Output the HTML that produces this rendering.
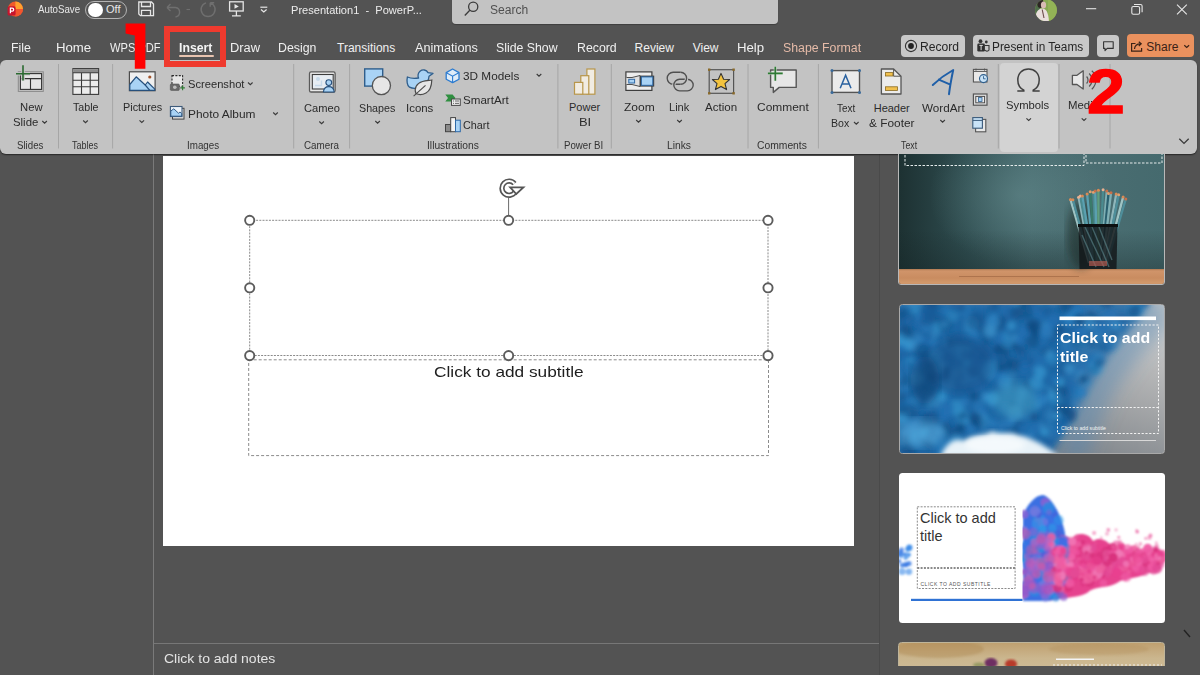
<!DOCTYPE html>
<html><head><meta charset="utf-8">
<style>
*{box-sizing:border-box;margin:0;padding:0}
html,body{width:1200px;height:675px;overflow:hidden;background:#535353;font-family:"Liberation Sans",sans-serif;position:relative}
.a{position:absolute}
.tx{position:absolute;white-space:pre;transform-origin:0 0;font-family:"Liberation Sans",sans-serif}
svg{position:absolute;overflow:visible}
</style></head><body>
<!-- title bar -->
<div class="a" style="left:452px;top:-4px;width:326px;height:28px;background:#c3c3c3;border-radius:4px;box-shadow:0 1px 1px rgba(0,0,0,.25)"></div>
<div class="a" style="left:85px;top:1px;width:42px;height:18px;border:1.5px solid #b4b4b4;border-radius:9px"></div>
<div class="a" style="left:88px;top:2.5px;width:14.5px;height:14.5px;background:#fff;border-radius:50%"></div>
<!-- tab row buttons -->
<div class="a" style="left:901px;top:35px;width:64px;height:22px;background:#c8c8c8;border-radius:4px"></div>
<div class="a" style="left:973px;top:35px;width:116px;height:22px;background:#c8c8c8;border-radius:4px"></div>
<div class="a" style="left:1097px;top:35px;width:22px;height:22px;background:#c8c8c8;border-radius:4px"></div>
<div class="a" style="left:1127px;top:34px;width:67px;height:23px;background:#ea915e;border-radius:4px"></div>
<div class="a" style="left:179px;top:55px;width:35px;height:2px;background:#e8c4b0;border-radius:1px"></div>
<!-- panes -->
<div class="a" style="left:153px;top:150px;width:1px;height:525px;background:#7a7a7a"></div>
<div class="a" style="left:879px;top:150px;width:1px;height:525px;background:#4a4a4a"></div>
<div class="a" style="left:154px;top:643px;width:725px;height:1px;background:#777"></div>
<!-- slide -->
<div class="a" style="left:163px;top:156px;width:691.3px;height:389.5px;background:#fff"></div>
<!-- ribbon -->
<div class="a" style="left:0px;top:60px;width:1197px;height:93.5px;background:#c3c3c3;border-radius:6px;box-shadow:0 1px 1.5px rgba(0,0,0,.55)"></div>
<div class="a" style="left:999.5px;top:62.5px;width:58.5px;height:89px;background:#d3d3d3;border-radius:4px"></div>
<!-- slide placeholders -->
<svg class="a" style="left:0;top:0" width="1200" height="675" viewBox="0 0 1200 675">
 <rect x="249.7" y="220.3" width="518.3" height="135.2" fill="none" stroke="#8a8a8a" stroke-width="1" stroke-dasharray="2 1.2"/>
 <rect x="248.7" y="359.8" width="519.8" height="95.8" fill="none" stroke="#8c8c8c" stroke-width="1" stroke-dasharray="3 2"/>
 <line x1="508.6" y1="198" x2="508.6" y2="215" stroke="#6a6a6a" stroke-width="1"/>
 <g fill="#fff" stroke="#5c5c5c" stroke-width="1.9">
  <circle cx="249.7" cy="220.3" r="4.6"/><circle cx="508.6" cy="220.3" r="4.6"/><circle cx="768" cy="220.3" r="4.6"/>
  <circle cx="249.7" cy="287.8" r="4.6"/><circle cx="768" cy="287.8" r="4.6"/>
  <circle cx="249.7" cy="355.6" r="4.6"/><circle cx="508.6" cy="355.6" r="4.6"/><circle cx="768" cy="355.6" r="4.6"/>
 </g>
 <g fill="none" stroke-linecap="butt">
  <path d="M514.9 192.3 A7.1 7.1 0 1 1 514.5 183.6" stroke="#555" stroke-width="5.3"/>
  <path d="M514.9 192.3 A7.1 7.1 0 1 1 514.5 183.6" stroke="#fff" stroke-width="2.0"/>
 </g>
 <path d="M510.2 187.4 L523.4 187.4 L516.3 194 Z" fill="#fff" stroke="#555" stroke-width="1.8" stroke-linejoin="miter"/>
</svg>
<svg class="a" style="left:0;top:0" width="1200" height="675" viewBox="0 0 1200 675">
 <!-- ===== title bar ===== -->
 <g>
  <circle cx="15.4" cy="9" r="7.6" fill="#f05a2a"/>
  <path d="M15.4 1.4 A7.6 7.6 0 0 1 23 9 L15.4 9 Z" fill="#ffa02e"/>
  <path d="M23 9 A7.6 7.6 0 0 1 15.4 16.6 L15.4 9 Z" fill="#f4552e"/>
  <rect x="7.6" y="6.3" width="8" height="9.2" rx="1.6" fill="#c8142c"/>
  <path d="M10.4 13.2 V8.2 H12.2 A1.5 1.5 0 0 1 12.2 11.2 H10.4" fill="none" stroke="#fff" stroke-width="1.25"/>
 </g>
 <g fill="none" stroke="#e6e6e6" stroke-width="1.3">
  <path d="M138.8 2 H151.5 L153.5 4 V15.6 H140.5 L138.8 13.9 Z"/>
  <path d="M141.5 2 V6.5 H150.5 V2"/>
  <path d="M141.5 15.6 V10.3 H150.5 V15.6"/>
 </g>
 <g fill="none" stroke="#6f6f6f" stroke-width="1.4">
  <path d="M167 7.5 L170.5 4 M167 7.5 L170.5 11 M167 7.5 H175.5 A4.8 4.8 0 0 1 175.5 17"/>
  <path d="M186.5 9.5 H190" stroke-width="1.1"/>
  <path d="M206 2.8 A7 7 0 1 0 210.2 2.8 M210.2 2.8 L210.2 6.8 M210.2 2.8 L214.2 2.8"/>
 </g>
 <g fill="none" stroke="#e6e6e6" stroke-width="1.3">
  <rect x="229.6" y="1.8" width="13.6" height="9.2"/>
  <path d="M236.4 11 V15.8 M232 15.8 H240.8"/>
 </g>
 <path d="M234.5 4 L234.5 8.8 L238.8 6.4 Z" fill="#e6e6e6"/>
 <g fill="none" stroke="#e6e6e6" stroke-width="1.2">
  <path d="M260.3 7.2 H267.3"/><path d="M261 9.5 L263.8 12 L266.6 9.5"/>
 </g>
 <g fill="none" stroke="#3c3c3c" stroke-width="1.3">
  <circle cx="473.2" cy="6.7" r="4.6"/><path d="M469.8 10.2 L464.8 15.5"/>
 </g>
 <g>
  <defs><clipPath id="av2"><circle cx="1046" cy="10.2" r="10.9"/></clipPath></defs>
  <circle cx="1046" cy="10.2" r="10.9" fill="#86a852"/>
  <g clip-path="url(#av2)">
   <rect x="1034" y="-2" width="6" height="24" fill="#4f6e4a"/>
   <rect x="1048" y="-2" width="12" height="24" fill="#93b356"/>
   <ellipse cx="1040.5" cy="3.5" rx="3.2" ry="4.5" fill="#2e2624"/>
   <ellipse cx="1043.5" cy="5" rx="2.6" ry="3.6" fill="#d9bcb4"/>
   <path d="M1035 22 C1035 13 1037.5 9 1042 8.5 C1046.5 8.5 1048.5 13 1049 22 Z" fill="#e9dfdc"/>
   <path d="M1042.2 9.5 L1044 18" stroke="#6a4848" stroke-width="1.1"/>
  </g>
 </g>
 <g fill="none" stroke="#e6e6e6" stroke-width="1.1">
  <path d="M1086 8.7 H1096.2"/>
  <rect x="1131.8" y="6.5" width="7.8" height="7.8" rx="1.5"/>
  <path d="M1134 4.5 H1140.5 A1.6 1.6 0 0 1 1142.1 6.1 V12.3"/>
  <path d="M1177 4.6 L1186.8 14.3 M1186.8 4.6 L1177 14.3"/>
 </g>
 <!-- ===== tab row buttons ===== -->
 <circle cx="911" cy="46" r="5.6" fill="none" stroke="#333" stroke-width="1.1"/>
 <circle cx="911" cy="46" r="2.9" fill="#222"/>
 <g>
  <circle cx="980.5" cy="41.2" r="1.9" fill="#333"/>
  <circle cx="986.3" cy="42" r="1.4" fill="#333"/>
  <rect x="977.3" y="43.6" width="7.6" height="8" rx="1.3" fill="#2e2e2e"/>
  <path d="M984.9 45.5 H989 V50 A2.4 2.4 0 0 1 984.9 50" fill="none" stroke="#333" stroke-width="1.1"/>
  <path d="M979.4 45.4 H982.8 M981.1 45.4 V50.2" stroke="#ddd" stroke-width="1"/>
 </g>
 <path d="M1103.6 41.8 H1113.2 V48.4 H1107.2 L1105 50.6 V48.4 H1103.6 Z" fill="none" stroke="#333" stroke-width="1.1" stroke-linejoin="round"/>
 <g fill="none" stroke="#3a2216" stroke-width="1.2">
  <path d="M1135.5 43.5 H1131.6 V51.2 H1141.6 V48"/>
  <path d="M1134.5 49 C1134.8 45 1137 43.8 1140.5 43.8 M1138.8 41.7 L1141.2 43.8 L1138.8 46"/>
  <path d="M1184.3 45.2 L1186.7 47.4 L1189.1 45.2"/>
 </g>
 <!-- ===== ribbon separators ===== -->
 <g stroke="#a6a6a6" stroke-width="1">
  <path d="M58.5 64 V148.5 M112.6 64 V148.5 M293.7 64 V148.5 M349.6 64 V148.5 M557.9 64 V148.5 M611.3 64 V148.5 M748 64 V148.5 M818.4 64 V148.5 M998.3 64 V148.5 M1059 64 V148.5 M1110 64 V148.5"/>
 </g>
 <!-- chevrons -->
 <g fill="none" stroke="#3a3a3a" stroke-width="1.1">
  <path d="M42.3 121 L44.6 123.2 L46.9 121"/>
  <path d="M83.2 120.5 L85.5 122.7 L87.8 120.5"/>
  <path d="M139.5 120.3 L141.8 122.5 L144.1 120.3"/>
  <path d="M248 82.5 L250.3 84.7 L252.6 82.5"/>
  <path d="M273.2 112.5 L275.5 114.7 L277.8 112.5"/>
  <path d="M319.3 121.5 L321.6 123.7 L323.9 121.5"/>
  <path d="M375.3 121 L377.6 123.2 L379.9 121"/>
  <path d="M536.7 74 L539 76.2 L541.3 74"/>
  <path d="M636.2 120 L638.5 122.2 L640.8 120"/>
  <path d="M677.2 120 L679.5 122.2 L681.8 120"/>
  <path d="M854 122 L856.3 124.2 L858.6 122"/>
  <path d="M940.3 120 L942.6 122.2 L944.9 120"/>
  <path d="M1026.4 118.3 L1028.7 120.5 L1031 118.3"/>
  <path d="M1081.7 118.3 L1084 120.5 L1086.3 118.3"/>
  <path d="M1179.3 138.8 L1184 143.4 L1188.7 138.8" stroke-width="1.3"/>
 </g>
 <!-- New Slide -->
 <rect x="18.3" y="71.8" width="25" height="19.6" fill="none" stroke="#8a8a8a" stroke-width="1"/>
 <rect x="20.4" y="73.6" width="21.2" height="15.8" fill="#e4e4e4" stroke="#333" stroke-width="1.1"/>
 <path d="M20.4 78.6 H41.6 M30.5 78.6 V89.4" stroke="#333" stroke-width="1.1"/>
 <path d="M23 65.3 V80.6 M16 73.8 H30" stroke="#c3c3c3" stroke-width="3.6"/>
 <path d="M23 65.3 V80.6 M16 73.8 H30" stroke="#2a6a30" stroke-width="1.6"/>
 <!-- Table -->
 <rect x="72.9" y="68.6" width="25.7" height="25.8" fill="#ececec" stroke="#3a3a3a" stroke-width="1.1"/>
 <rect x="73.4" y="69.1" width="24.7" height="3.6" fill="#8c8c8c"/>
 <path d="M72.9 72.8 H98.6 M72.9 80.3 H98.6 M72.9 86.8 H98.6 M81.5 72.8 V94.4 M90.2 72.8 V94.4" stroke="#3a3a3a" stroke-width="1.1"/>
 <!-- Pictures -->
 <rect x="129.4" y="71.8" width="25.7" height="18.9" fill="#efefef" stroke="#4a4a4a" stroke-width="1.2"/>
 <path d="M129.8 84.5 L136.2 76.8 L145.2 85 L147.6 82 L154.8 89.2 V90.3 H129.8 Z" fill="#a9d3f5" stroke="#27507c" stroke-width="1.2" stroke-linejoin="round"/>
 <path d="M145.2 85 L149.8 90.3" stroke="#27507c" stroke-width="1.2"/>
 <circle cx="149.8" cy="77" r="1.6" fill="#a3542a"/>
 <!-- Screenshot -->
 <rect x="172" y="75.6" width="10.6" height="10.6" fill="#e6e6e6" stroke="#2a2a2a" stroke-width="1.1" stroke-dasharray="2 1.4"/>
 <rect x="170.3" y="84" width="9" height="6.4" rx="1" fill="#6a6a6a" stroke="#555" stroke-width="0.6"/>
 <circle cx="174.8" cy="87.2" r="1.8" fill="#bdbdbd"/>
 <path d="M182.6 85.6 V90.2 M180.3 87.9 H184.9" stroke="#2e7a34" stroke-width="1.1"/>
 <!-- Photo Album -->
 <rect x="172.5" y="108.3" width="11.5" height="10.8" fill="#d9d9d9" stroke="#444" stroke-width="1"/>
 <rect x="170.4" y="106.5" width="11.6" height="10" fill="#eef4fa" stroke="#3d5a7a" stroke-width="1.1"/>
 <path d="M170.8 111 L173.8 108.8 L178.5 113.2 L180 112 L181.7 113.5 V116.2 H170.8 Z" fill="#a9d3f5" stroke="#27507c" stroke-width="0.9"/>
 <!-- Cameo -->
 <rect x="309.5" y="71.8" width="25.6" height="20.2" rx="1.6" fill="#e8e8e8" stroke="#5a5a5a" stroke-width="1.3"/>
 <rect x="312.3" y="74.5" width="20.9" height="14.5" fill="#e7edf3" stroke="#3c3c3c" stroke-width="1.1"/>
 <circle cx="318" cy="79" r="2" fill="#c6d9ea"/>
 <path d="M315 85.5 H321.5 V80.5" stroke="#c6d9ea" stroke-width="1.3" fill="none"/>
 <path d="M323.4 92 C323.8 88 325.8 86.6 328.8 86.6 C331.8 86.6 333.8 88 334.2 92 Z" fill="#a9d3f5" stroke="#27507c" stroke-width="1.1"/>
 <circle cx="328.8" cy="82.6" r="2.9" fill="#a9d3f5" stroke="#27507c" stroke-width="1.1"/>
 <!-- Shapes -->
 <rect x="364.7" y="68.9" width="18" height="17.2" fill="#a9d3f5" stroke="#2f5e8c" stroke-width="1.4"/>
 <circle cx="381.4" cy="85.6" r="9.1" fill="#e6e6e6" stroke="#555" stroke-width="1.3"/>
 <!-- Icons -->
 <path d="M407.4 77 C410 78.2 414 78.8 418.6 78 C417.6 76.5 417.8 73 420 71.2 C422.6 69.1 426.5 69.6 428 72.6 L433 73.4 L429 76.2 C428.8 80 427 82.6 424 84.5 C420 87.5 414 89.5 409.5 87.2 C407 85.6 406.6 80.5 407.4 77 Z" fill="#a9d3f5" stroke="#2f5e8c" stroke-width="1.3" stroke-linejoin="round"/>
 <path d="M416 93.5 C413.8 88.5 416.5 83.2 422.5 81.5 C425.5 80.7 429.5 80.4 431.8 80 C431.6 86 430.5 90.5 426 93 C422.8 94.7 418.5 94.8 416 93.5 Z" fill="#e6e6e6" stroke="#4a4a4a" stroke-width="1.2"/>
 <path d="M413.6 96.2 L425.5 85.3" stroke="#4a4a4a" stroke-width="1.1"/>
 <!-- 3D Models -->
 <path d="M452.6 69 L459 72.6 V79.2 L452.6 82.6 L446.2 79.2 V72.6 Z" fill="#dfecf8" stroke="#2b7bd0" stroke-width="1.3" stroke-linejoin="round"/>
 <path d="M446.4 72.8 L452.6 76.2 L458.8 72.8 M452.6 76.2 V82.4" fill="none" stroke="#2b7bd0" stroke-width="1.1"/>
 <!-- SmartArt -->
 <path d="M445.3 94.6 H452.6 L455.4 98 L452.6 101.6 H445.3 L448 98 Z" fill="#2f8f40"/>
 <rect x="451.5" y="99" width="8.8" height="6.4" fill="#ebebeb" stroke="#4a4a4a" stroke-width="1"/>
 <path d="M453 101 H454 M455 101 H459 M453 103.4 H454 M455 103.4 H459" stroke="#4a4a4a" stroke-width="0.8"/>
 <!-- Chart -->
 <rect x="445.5" y="124.5" width="5.2" height="7.2" fill="#8a8a8a" stroke="#444" stroke-width="1"/>
 <rect x="450.7" y="117.6" width="4.8" height="14.1" fill="#f3f3f3" stroke="#444" stroke-width="1"/>
 <rect x="455.5" y="120.2" width="4.8" height="11.5" fill="#a9d3f5" stroke="#2f6aa8" stroke-width="1"/>
 <!-- Power BI -->
 <g fill="#f1ece2" stroke="#b8964a" stroke-width="1.2">
  <rect x="586.9" y="69" width="8" height="25.2"/>
  <rect x="580.8" y="75.7" width="8" height="18.5"/>
  <rect x="574.5" y="82.4" width="8.3" height="11.8"/>
 </g>
 <!-- Zoom -->
 <rect x="625.9" y="71.9" width="26" height="18.5" fill="#ededed" stroke="#3d3d3d" stroke-width="1.2"/>
 <path d="M626.5 77.5 H632 L640 75.5 V86.5 L632 84.5 H626.5" fill="#e0e0e0" stroke="#3d3d3d" stroke-width="0.9"/>
 <rect x="628.8" y="79.3" width="5.8" height="3.7" fill="#a9d3f5" stroke="#2f6aa8" stroke-width="1"/>
 <rect x="640" y="75.6" width="14.2" height="11" fill="#3d3d3d"/>
 <rect x="641.4" y="76.9" width="11.4" height="8.4" fill="#a9d3f5" stroke="#2f6aa8" stroke-width="1"/>
 <!-- Link -->
 <g fill="none" stroke-width="1.35">
  <path d="M673.2 72.2 H680.6 A6 6 0 0 1 680.6 84.2 H673.2 A6 6 0 0 1 673.2 72.2 Z" stroke="#505050"/>
  <path d="M679.6 79.2 A5.8 5.8 0 0 0 679.6 90.8" stroke="#c3c3c3" stroke-width="3.4"/>
  <path d="M679.6 79.2 H687.4 A5.8 5.8 0 0 1 687.4 90.8 H679.6 A5.8 5.8 0 0 1 679.6 79.2 Z" stroke="#505050"/>
  <path d="M680.6 72.2 A6 6 0 0 1 680.6 84.2" stroke="#c3c3c3" stroke-width="3.4"/>
  <path d="M680.6 72.2 A6 6 0 0 1 680.6 84.2" stroke="#505050"/>
 </g>
 <!-- Action -->
 <rect x="709.2" y="69.7" width="24.4" height="23.6" fill="none" stroke="#555" stroke-width="1.2"/>
 <g fill="#8a6a2a"><rect x="708" y="68.5" width="2.4" height="2.4"/><rect x="732.4" y="68.5" width="2.4" height="2.4"/><rect x="708" y="92.1" width="2.4" height="2.4"/><rect x="732.4" y="92.1" width="2.4" height="2.4"/></g>
 <path d="M721 73.4 L723.6 79.2 L729.6 79.5 L725 83.6 L726.6 89.6 L721 86.4 L715.4 89.6 L717 83.6 L712.4 79.5 L718.4 79.2 Z" fill="#f3c33e" stroke="#333" stroke-width="1.1" stroke-linejoin="round"/>
 <!-- Comment -->
 <path d="M770.6 70 H796.2 V87.4 H779.2 L773.3 92.4 V87.4 H770.6 Z" fill="#e6e6e6" stroke="#555" stroke-width="1.4" stroke-linejoin="round"/>
 <path d="M775.3 66.8 V80.8 M767.9 73.4 H782.7" stroke="#c9dcc9" stroke-width="3.4" opacity=".6"/>
 <path d="M775.3 66.8 V80.8 M767.9 73.4 H782.7" stroke="#2e7a34" stroke-width="1.6"/>
 <!-- Text Box -->
 <rect x="832" y="70.6" width="27.5" height="21.8" fill="#ebebeb" stroke="#555" stroke-width="1.4"/>
 <g fill="#3a6a9a"><circle cx="832" cy="70.6" r="1.5"/><circle cx="859.5" cy="70.6" r="1.5"/><circle cx="832" cy="92.4" r="1.5"/><circle cx="859.5" cy="92.4" r="1.5"/></g>
 <path d="M840.2 88.2 L845.6 75.2 L851 88.2 M842 84 H849.2" fill="none" stroke="#2a62a0" stroke-width="1.5"/>
 <!-- Header & Footer -->
 <path d="M881.4 69 H893.6 L901 76.2 V94 H881.4 Z" fill="#ececec" stroke="#555" stroke-width="1.3" stroke-linejoin="round"/>
 <path d="M893.6 69 V76.2 H901" fill="none" stroke="#555" stroke-width="1"/>
 <rect x="885.5" y="72.6" width="7.4" height="3.4" fill="#f0c04e" stroke="#8a6a20" stroke-width="0.8"/>
 <rect x="885.5" y="86.8" width="12" height="3.6" fill="#f0c04e" stroke="#8a6a20" stroke-width="0.8"/>
 <!-- WordArt -->
 <path d="M932.8 85 C938 80 946 74 953.2 70 C951.5 78 950 86 949 94.2 M938.8 79.6 L950.4 84.6" fill="none" stroke="#1f5fa8" stroke-width="2" stroke-linecap="round" stroke-linejoin="round"/>
 <!-- Date & Time -->
 <rect x="973.4" y="69.4" width="13.6" height="12.6" fill="#e8e8e8" stroke="#555" stroke-width="1.1"/>
 <path d="M973.4 71.4 H987 M976 68.6 V70.6 M984.5 68.6 V70.6" stroke="#555" stroke-width="1"/>
 <circle cx="983.5" cy="78.6" r="4" fill="#c9e3f7" stroke="#2f5e8c" stroke-width="1.1"/>
 <path d="M983.5 76.2 V78.8 H985.6" fill="none" stroke="#2f5e8c" stroke-width="0.9"/>
 <!-- Slide number -->
 <rect x="973.4" y="94" width="13.6" height="11.2" fill="#dcdcdc" stroke="#555" stroke-width="1.2"/>
 <rect x="975.8" y="96.4" width="8.8" height="6.4" fill="#ececec" stroke="#444" stroke-width="0.9"/>
 <rect x="978.4" y="97.6" width="3.6" height="3.8" fill="#a9d3f5" stroke="#2f5e8c" stroke-width="0.8"/>
 <!-- Object -->
 <rect x="975.6" y="119.4" width="10.2" height="12.4" fill="#e8e8e8" stroke="#555" stroke-width="1.1"/>
 <rect x="972.8" y="117.6" width="9.6" height="10.6" fill="#c9e3f7" stroke="#3a5a7a" stroke-width="1.1"/>
 <path d="M972.8 120.4 H982.4" stroke="#3a5a7a" stroke-width="1"/>
 <!-- Symbols -->
 <path d="M1017.3 91 H1023.8 V90.2 C1019.5 88 1017.8 84.2 1017.8 80 C1017.8 73.2 1022.4 69 1028.5 69 C1034.6 69 1039.2 73.2 1039.2 80 C1039.2 84.2 1037.5 88 1033.2 90.2 V91 H1039.7" fill="none" stroke="#404040" stroke-width="1.5"/>
 <!-- Media -->
 <path d="M1072.4 75.3 H1077 L1083.2 70.8 V89 L1077 84.5 H1072.4 Z" fill="#e8e8e8" stroke="#555" stroke-width="1.3" stroke-linejoin="round"/>
 <g fill="none" stroke="#555" stroke-width="1.2">
  <path d="M1086.6 76.5 A5 5 0 0 1 1086.6 83.5"/>
  <path d="M1089.2 73.5 A9 9 0 0 1 1089.2 86.5"/>
  <path d="M1091.8 70.8 A12.5 12.5 0 0 1 1091.8 89.2"/>
 </g>
</svg>
<!-- right pane thumbnails -->
<div class="a" style="left:880px;top:154px;width:320px;height:512px;overflow:hidden">
 <!-- thumb 1 -->
 <div class="a" style="left:18px;top:-20px;width:266.5px;height:150.8px;border-radius:3px;overflow:hidden;border:1px solid #b9b9b9;background:linear-gradient(90deg,#1d3132 0%,#2f4d50 25%,#46696d 50%,#4a6d71 75%,#456a6e 100%)">
  <div class="a" style="left:0;top:0;width:266px;height:150px;background:radial-gradient(ellipse 90px 70px at 120px 60px,rgba(110,150,152,.45),rgba(110,150,152,0))"></div>
  <div class="a" style="left:0;top:95px;width:266px;height:40px;background:linear-gradient(180deg,rgba(20,35,36,0),rgba(20,35,36,.35))"></div>
  <div class="a" style="left:0;top:133.5px;width:266px;height:17px;background:linear-gradient(180deg,#b07a52 0px,#d0946a 2px,#c98c60 9px,#d39a6c 14px,#c08560 100%)"></div>
  <div class="a" style="left:60px;top:141px;width:120px;height:1px;background:rgba(120,70,40,.35)"></div>
  <svg class="a" style="left:0;top:0" width="266" height="150" viewBox="0 0 266 150">
   <defs><filter id="bl1"><feGaussianBlur stdDeviation="4"/></filter></defs>
   <ellipse cx="182" cy="100" rx="14" ry="34" fill="#14201f" opacity=".5" filter="url(#bl1)"/>
   <g stroke-width="2.3" stroke-linecap="butt"><line x1="190.0" y1="128" x2="171.5" y2="64.5" stroke="#9fc4c4"/><line x1="191.1" y1="128" x2="173.9" y2="64.8" stroke="#4e8e9a"/><line x1="192.1" y1="128" x2="179.6" y2="62.2" stroke="#8fb6bb"/><line x1="193.2" y1="128" x2="181.3" y2="61.0" stroke="#4a8a8f"/><line x1="194.2" y1="128" x2="183.4" y2="61.1" stroke="#5aa0b0"/><line x1="195.3" y1="128" x2="188.1" y2="59.1" stroke="#5aa0b0"/><line x1="196.4" y1="128" x2="191.2" y2="56.8" stroke="#3a7a6a"/><line x1="197.4" y1="128" x2="194.4" y2="57.3" stroke="#4a8a8f"/><line x1="198.5" y1="128" x2="196.2" y2="56.0" stroke="#5aa0b0"/><line x1="199.5" y1="128" x2="199.4" y2="55.3" stroke="#5f9f7f"/><line x1="200.6" y1="128" x2="204.1" y2="54.8" stroke="#4a8a8f"/><line x1="201.6" y1="128" x2="207.8" y2="56.0" stroke="#7fb0b5"/><line x1="202.7" y1="128" x2="209.5" y2="58.5" stroke="#2a6070"/><line x1="203.8" y1="128" x2="212.0" y2="57.8" stroke="#7fb0b5"/><line x1="204.8" y1="128" x2="217.2" y2="59.1" stroke="#8fb6bb"/><line x1="205.9" y1="128" x2="219.7" y2="59.8" stroke="#4e8e9a"/><line x1="206.9" y1="128" x2="224.1" y2="62.1" stroke="#9fc4c4"/><line x1="208.0" y1="128" x2="226.8" y2="64.0" stroke="#4e8e9a"/></g><g><circle cx="171.5" cy="64.5" r="1.5" fill="#d98a55"/><circle cx="173.9" cy="64.8" r="1.5" fill="#d98a55"/><circle cx="179.6" cy="62.2" r="1.5" fill="#e8b090"/><circle cx="181.3" cy="61.0" r="1.5" fill="#e8b090"/><circle cx="183.4" cy="61.1" r="1.5" fill="#d98a55"/><circle cx="188.1" cy="59.1" r="1.5" fill="#d98a55"/><circle cx="191.2" cy="56.8" r="1.5" fill="#e0a070"/><circle cx="194.4" cy="57.3" r="1.5" fill="#e0a070"/><circle cx="196.2" cy="56.0" r="1.5" fill="#c8704a"/><circle cx="199.4" cy="55.3" r="1.5" fill="#d98a55"/><circle cx="204.1" cy="54.8" r="1.5" fill="#e8b090"/><circle cx="207.8" cy="56.0" r="1.5" fill="#c8704a"/><circle cx="209.5" cy="58.5" r="1.5" fill="#e0a070"/><circle cx="212.0" cy="57.8" r="1.5" fill="#c8704a"/><circle cx="217.2" cy="59.1" r="1.5" fill="#d98a55"/><circle cx="219.7" cy="59.8" r="1.5" fill="#e0a070"/><circle cx="224.1" cy="62.1" r="1.5" fill="#d98a55"/><circle cx="226.8" cy="64.0" r="1.5" fill="#c8704a"/></g>
   <path d="M179.5 90 L218.5 90 L217.5 134 L180.5 134 Z" fill="#121618" opacity=".82"/>
   <g stroke="#6a9aa0" stroke-width="1.4" opacity=".5">
    <line x1="186" y1="92" x2="205" y2="132"/><line x1="193" y1="92" x2="210" y2="132"/><line x1="200" y1="92" x2="213" y2="125"/><line x1="183" y1="100" x2="197" y2="132"/>
   </g>
   <g fill="#b05a50" opacity=".7"><rect x="190" y="126" width="18" height="5"/></g>
   <rect x="179" y="89" width="40" height="3" fill="#0c0f10"/>
   <g fill="none" stroke="#e6ecec" stroke-width="1" stroke-dasharray="2.5 1.5">
    <path d="M6 0 V30.5 H185 V0"/>
    <path d="M187 0 V28 H263 V0"/>
   </g>
  </svg>
 </div>
 <!-- thumb 2 -->
 <div class="a" style="left:18.5px;top:150.3px;width:266px;height:149.6px;border-radius:3.5px;overflow:hidden;border:1px solid #a9a9a9;background:linear-gradient(100deg,#6e7c88 0%,#8b9299 60%,#c2c2c2 100%)">
  <svg class="a" style="left:0;top:0" width="266" height="150" viewBox="0 0 266 150">
   <defs>
    <filter id="bl2"><feGaussianBlur stdDeviation="5"/></filter>
    <filter id="bl3"><feGaussianBlur stdDeviation="2.8"/></filter><filter id="bl7" x="-20%" y="-20%" width="140%" height="140%"><feGaussianBlur stdDeviation="4"/></filter><filter id="bl8" x="-30%" y="-30%" width="160%" height="160%"><feGaussianBlur stdDeviation="9"/></filter>
    <linearGradient id="gr2" x1="0.55" y1="1" x2="1" y2="0.2"><stop offset="0" stop-color="#7c8288"/><stop offset=".5" stop-color="#a4a6a8"/><stop offset="1" stop-color="#c8c8c8"/></linearGradient>
   </defs>
   <rect x="0" y="0" width="266" height="150" fill="url(#gr2)"/>
<g filter="url(#bl7)"><path d="M-5 -5 H250 C240 15 225 30 212 45 C200 62 190 80 180 100 C170 120 160 135 148 155 H-5 Z" fill="#1f66a5"/></g>
<g filter="url(#bl8)"><path d="M180 -5 H266 V25 C250 38 236 55 222 75 C208 95 198 120 188 155 H160 Z" fill="#4f86b4" opacity=".45"/></g>
<g filter="url(#bl3)"><circle cx="153.8" cy="113.7" r="7.0" fill="#1f6fb0" opacity="0.73"/>
<circle cx="192.9" cy="34.8" r="3.3" fill="#1a5f9e" opacity="0.40"/>
<circle cx="114.6" cy="34.5" r="5.7" fill="#3a8fc8" opacity="0.36"/>
<circle cx="50.3" cy="39.7" r="7.6" fill="#3596cf" opacity="0.42"/>
<circle cx="198.3" cy="17.2" r="6.1" fill="#1a5f9e" opacity="0.41"/>
<circle cx="242.9" cy="-4.1" r="6.9" fill="#1a5f9e" opacity="0.74"/>
<circle cx="68.8" cy="148.8" r="5.7" fill="#3a8fc8" opacity="0.43"/>
<circle cx="0.5" cy="61.4" r="7.7" fill="#2270b5" opacity="0.38"/>
<circle cx="71.8" cy="91.5" r="3.0" fill="#15528a" opacity="0.38"/>
<circle cx="85.6" cy="44.0" r="6.5" fill="#1a5f9e" opacity="0.57"/>
<circle cx="174.7" cy="4.1" r="7.9" fill="#1f6fb0" opacity="0.78"/>
<circle cx="86.2" cy="59.7" r="5.7" fill="#3596cf" opacity="0.51"/>
<circle cx="142.5" cy="-3.5" r="3.2" fill="#1a5f9e" opacity="0.63"/>
<circle cx="57.8" cy="126.1" r="5.3" fill="#15528a" opacity="0.75"/>
<circle cx="59.0" cy="69.1" r="5.9" fill="#15528a" opacity="0.74"/>
<circle cx="4.3" cy="146.3" r="3.5" fill="#15528a" opacity="0.58"/>
<circle cx="87.5" cy="18.7" r="4.4" fill="#2a7dbe" opacity="0.49"/>
<circle cx="75.8" cy="23.4" r="3.4" fill="#1a5f9e" opacity="0.67"/>
<circle cx="73.9" cy="72.4" r="6.6" fill="#2a7dbe" opacity="0.79"/>
<circle cx="131.1" cy="59.9" r="4.2" fill="#15528a" opacity="0.72"/>
<circle cx="111.2" cy="62.5" r="3.3" fill="#1f6fb0" opacity="0.71"/>
<circle cx="80.2" cy="28.1" r="7.9" fill="#1a5f9e" opacity="0.63"/>
<circle cx="195.9" cy="12.1" r="5.2" fill="#1a5f9e" opacity="0.38"/>
<circle cx="102.3" cy="17.6" r="7.6" fill="#1a5f9e" opacity="0.79"/>
<circle cx="110.7" cy="73.1" r="6.6" fill="#0f4a80" opacity="0.47"/>
<circle cx="114.9" cy="139.3" r="3.6" fill="#1a5f9e" opacity="0.63"/>
<circle cx="122.3" cy="49.2" r="3.4" fill="#2270b5" opacity="0.58"/>
<circle cx="134.8" cy="75.5" r="3.3" fill="#15528a" opacity="0.66"/>
<circle cx="164.3" cy="116.5" r="4.8" fill="#2270b5" opacity="0.73"/>
<circle cx="62.5" cy="152.0" r="6.6" fill="#15528a" opacity="0.64"/>
<circle cx="143.1" cy="-3.1" r="5.7" fill="#2270b5" opacity="0.50"/>
<circle cx="64.8" cy="41.2" r="5.5" fill="#15528a" opacity="0.51"/>
<circle cx="159.2" cy="113.1" r="7.1" fill="#15528a" opacity="0.77"/>
<circle cx="39.0" cy="133.7" r="5.2" fill="#15528a" opacity="0.78"/>
<circle cx="127.1" cy="79.7" r="3.8" fill="#15528a" opacity="0.77"/>
<circle cx="116.7" cy="105.6" r="6.6" fill="#3596cf" opacity="0.43"/>
<circle cx="164.7" cy="62.3" r="6.1" fill="#2270b5" opacity="0.67"/>
<circle cx="2.0" cy="20.6" r="5.2" fill="#1a5f9e" opacity="0.45"/>
<circle cx="169.9" cy="95.9" r="3.2" fill="#0f4a80" opacity="0.79"/>
<circle cx="37.3" cy="137.7" r="3.6" fill="#1a5f9e" opacity="0.57"/>
<circle cx="134.8" cy="61.5" r="4.8" fill="#2a7dbe" opacity="0.62"/>
<circle cx="55.7" cy="139.5" r="3.0" fill="#3596cf" opacity="0.78"/>
<circle cx="170.7" cy="82.6" r="7.8" fill="#2270b5" opacity="0.39"/>
<circle cx="134.0" cy="49.3" r="5.9" fill="#15528a" opacity="0.72"/>
<circle cx="101.9" cy="125.1" r="6.2" fill="#15528a" opacity="0.56"/>
<circle cx="35.0" cy="56.2" r="5.4" fill="#3a8fc8" opacity="0.79"/>
<circle cx="150.2" cy="51.2" r="7.5" fill="#1f6fb0" opacity="0.52"/>
<circle cx="78.1" cy="141.6" r="5.7" fill="#15528a" opacity="0.63"/>
<circle cx="105.1" cy="31.2" r="4.5" fill="#3596cf" opacity="0.52"/>
<circle cx="213.0" cy="20.4" r="6.0" fill="#2270b5" opacity="0.57"/>
<circle cx="101.0" cy="46.1" r="7.9" fill="#0f4a80" opacity="0.77"/>
<circle cx="31.5" cy="-1.2" r="6.3" fill="#0f4a80" opacity="0.46"/>
<circle cx="5.2" cy="16.8" r="5.0" fill="#0f4a80" opacity="0.59"/>
<circle cx="64.8" cy="144.6" r="6.9" fill="#3a8fc8" opacity="0.57"/>
<circle cx="67.9" cy="73.8" r="8.0" fill="#2a7dbe" opacity="0.36"/>
<circle cx="27.1" cy="40.2" r="6.5" fill="#2270b5" opacity="0.68"/>
<circle cx="1.8" cy="51.0" r="6.4" fill="#1a5f9e" opacity="0.37"/>
<circle cx="59.4" cy="67.9" r="7.6" fill="#3a8fc8" opacity="0.36"/>
<circle cx="193.5" cy="63.4" r="5.9" fill="#0f4a80" opacity="0.74"/>
<circle cx="169.0" cy="110.1" r="7.5" fill="#0f4a80" opacity="0.72"/>
<circle cx="11.8" cy="128.8" r="6.5" fill="#3596cf" opacity="0.61"/>
<circle cx="160.3" cy="70.6" r="4.6" fill="#1a5f9e" opacity="0.57"/>
<circle cx="135.0" cy="74.6" r="4.7" fill="#1a5f9e" opacity="0.54"/>
<circle cx="133.1" cy="2.8" r="6.7" fill="#2270b5" opacity="0.72"/>
<circle cx="1.5" cy="110.6" r="7.9" fill="#3596cf" opacity="0.67"/>
<circle cx="7.5" cy="129.7" r="4.1" fill="#2a7dbe" opacity="0.67"/>
<circle cx="29.3" cy="41.8" r="7.6" fill="#1a5f9e" opacity="0.43"/>
<circle cx="42.2" cy="123.3" r="3.3" fill="#3a8fc8" opacity="0.37"/>
<circle cx="22.6" cy="55.7" r="3.4" fill="#1f6fb0" opacity="0.61"/>
<circle cx="25.2" cy="58.8" r="6.1" fill="#1f6fb0" opacity="0.54"/>
<circle cx="75.2" cy="91.0" r="5.4" fill="#15528a" opacity="0.76"/>
<circle cx="30.2" cy="42.2" r="5.8" fill="#2270b5" opacity="0.76"/>
<circle cx="136.5" cy="94.3" r="4.3" fill="#3a8fc8" opacity="0.46"/>
<circle cx="186.4" cy="77.7" r="3.7" fill="#3a8fc8" opacity="0.74"/>
<circle cx="110.6" cy="57.2" r="3.7" fill="#1f6fb0" opacity="0.64"/>
<circle cx="16.7" cy="101.9" r="3.5" fill="#2a7dbe" opacity="0.58"/>
<circle cx="110.6" cy="57.4" r="5.3" fill="#15528a" opacity="0.40"/>
<circle cx="130.3" cy="81.7" r="4.9" fill="#1a5f9e" opacity="0.78"/>
<circle cx="104.5" cy="122.1" r="6.7" fill="#2a7dbe" opacity="0.79"/>
<circle cx="30.6" cy="95.0" r="4.8" fill="#3a8fc8" opacity="0.48"/>
<circle cx="198.0" cy="55.5" r="6.6" fill="#15528a" opacity="0.64"/>
<circle cx="146.1" cy="86.7" r="6.7" fill="#3596cf" opacity="0.38"/>
<circle cx="4.5" cy="24.8" r="4.0" fill="#0f4a80" opacity="0.75"/>
<circle cx="117.7" cy="116.7" r="3.0" fill="#0f4a80" opacity="0.49"/>
<circle cx="77.4" cy="68.9" r="4.0" fill="#1a5f9e" opacity="0.38"/>
<circle cx="114.8" cy="83.3" r="3.6" fill="#1a5f9e" opacity="0.69"/>
<circle cx="166.4" cy="0.3" r="7.5" fill="#15528a" opacity="0.77"/>
<circle cx="89.1" cy="145.1" r="6.4" fill="#0f4a80" opacity="0.56"/>
<circle cx="165.5" cy="41.6" r="6.4" fill="#1a5f9e" opacity="0.37"/>
<circle cx="177.3" cy="87.0" r="6.3" fill="#3596cf" opacity="0.76"/>
<circle cx="42.0" cy="52.8" r="3.3" fill="#0f4a80" opacity="0.42"/>
<circle cx="56.3" cy="102.5" r="7.7" fill="#3596cf" opacity="0.68"/>
<circle cx="64.0" cy="68.9" r="5.3" fill="#3596cf" opacity="0.43"/>
<circle cx="3.5" cy="128.7" r="7.2" fill="#15528a" opacity="0.77"/>
<circle cx="177.7" cy="32.9" r="7.0" fill="#2a7dbe" opacity="0.77"/>
<circle cx="8.7" cy="34.0" r="3.3" fill="#3596cf" opacity="0.70"/>
<circle cx="7.2" cy="128.3" r="5.2" fill="#1f6fb0" opacity="0.74"/>
<circle cx="172.4" cy="97.5" r="3.9" fill="#3a8fc8" opacity="0.39"/>
<circle cx="75.0" cy="12.3" r="5.7" fill="#1a5f9e" opacity="0.62"/>
<circle cx="213.5" cy="29.3" r="3.1" fill="#15528a" opacity="0.57"/>
<circle cx="140.7" cy="55.3" r="6.1" fill="#1f6fb0" opacity="0.76"/>
<circle cx="73.4" cy="66.8" r="7.1" fill="#3a8fc8" opacity="0.60"/>
<circle cx="30.4" cy="72.3" r="6.9" fill="#2270b5" opacity="0.72"/>
<circle cx="74.8" cy="15.8" r="3.4" fill="#3a8fc8" opacity="0.66"/>
<circle cx="164.9" cy="39.1" r="5.5" fill="#3a8fc8" opacity="0.37"/>
<circle cx="46.0" cy="40.8" r="4.9" fill="#2a7dbe" opacity="0.38"/>
<circle cx="191.2" cy="55.8" r="6.8" fill="#1f6fb0" opacity="0.75"/>
<circle cx="161.8" cy="116.6" r="5.9" fill="#0f4a80" opacity="0.41"/>
<circle cx="-0.2" cy="2.6" r="5.1" fill="#2a7dbe" opacity="0.72"/>
<circle cx="92.5" cy="15.8" r="3.3" fill="#1a5f9e" opacity="0.41"/>
<circle cx="121.9" cy="46.7" r="3.2" fill="#1f6fb0" opacity="0.36"/>
<circle cx="7.9" cy="15.8" r="4.8" fill="#2270b5" opacity="0.78"/>
<circle cx="151.1" cy="32.0" r="5.1" fill="#15528a" opacity="0.44"/>
<circle cx="86.4" cy="21.1" r="6.1" fill="#1a5f9e" opacity="0.68"/>
<circle cx="19.3" cy="79.8" r="3.9" fill="#1a5f9e" opacity="0.55"/>
<circle cx="25.1" cy="45.7" r="7.6" fill="#0f4a80" opacity="0.62"/>
<circle cx="38.7" cy="2.7" r="6.3" fill="#1a5f9e" opacity="0.59"/>
<circle cx="21.4" cy="125.3" r="5.1" fill="#1f6fb0" opacity="0.44"/>
<circle cx="-4.7" cy="140.4" r="4.2" fill="#15528a" opacity="0.53"/>
<circle cx="50.0" cy="39.3" r="4.0" fill="#15528a" opacity="0.69"/>
<circle cx="195.2" cy="53.7" r="7.0" fill="#1f6fb0" opacity="0.63"/>
<circle cx="97.2" cy="17.9" r="7.2" fill="#0f4a80" opacity="0.52"/>
<circle cx="18.9" cy="58.5" r="6.8" fill="#2270b5" opacity="0.76"/>
<circle cx="45.8" cy="122.5" r="4.6" fill="#0f4a80" opacity="0.74"/>
<circle cx="153.9" cy="123.1" r="4.9" fill="#1f6fb0" opacity="0.40"/>
<circle cx="149.4" cy="94.4" r="7.1" fill="#1f6fb0" opacity="0.49"/>
<circle cx="1.9" cy="44.9" r="4.9" fill="#0f4a80" opacity="0.60"/>
<circle cx="171.1" cy="67.0" r="6.9" fill="#1f6fb0" opacity="0.59"/>
<circle cx="198.7" cy="53.0" r="6.0" fill="#3a8fc8" opacity="0.48"/>
<circle cx="14.8" cy="9.0" r="4.8" fill="#3596cf" opacity="0.49"/>
<circle cx="177.6" cy="6.5" r="6.8" fill="#2270b5" opacity="0.75"/>
<circle cx="48.2" cy="77.7" r="7.5" fill="#3a8fc8" opacity="0.50"/>
<circle cx="195.3" cy="62.8" r="7.8" fill="#3596cf" opacity="0.52"/>
<circle cx="47.8" cy="103.4" r="4.6" fill="#15528a" opacity="0.40"/>
<circle cx="170.6" cy="83.5" r="6.6" fill="#15528a" opacity="0.46"/>
<circle cx="20.5" cy="42.0" r="7.0" fill="#2a7dbe" opacity="0.75"/>
<circle cx="37.7" cy="96.2" r="6.8" fill="#3a8fc8" opacity="0.65"/>
<circle cx="140.3" cy="95.2" r="6.2" fill="#3596cf" opacity="0.54"/>
<circle cx="103.5" cy="79.6" r="7.5" fill="#2270b5" opacity="0.54"/>
<circle cx="16.5" cy="137.3" r="4.7" fill="#3596cf" opacity="0.36"/>
<circle cx="24.5" cy="85.0" r="6.0" fill="#1a5f9e" opacity="0.55"/>
<circle cx="78.1" cy="11.4" r="6.9" fill="#15528a" opacity="0.68"/>
<circle cx="10.7" cy="72.6" r="7.2" fill="#2a7dbe" opacity="0.49"/>
<circle cx="116.6" cy="11.1" r="4.0" fill="#1a5f9e" opacity="0.40"/>
<circle cx="80.6" cy="53.8" r="6.8" fill="#0f4a80" opacity="0.68"/>
<circle cx="21.2" cy="5.3" r="4.0" fill="#15528a" opacity="0.43"/>
<circle cx="190.2" cy="34.3" r="7.7" fill="#0f4a80" opacity="0.52"/>
<circle cx="25.0" cy="90.5" r="4.9" fill="#1f6fb0" opacity="0.57"/>
<circle cx="13.4" cy="116.6" r="6.6" fill="#2270b5" opacity="0.36"/>
<circle cx="186.5" cy="26.3" r="4.7" fill="#1a5f9e" opacity="0.48"/>
<circle cx="122.2" cy="106.5" r="6.9" fill="#2a7dbe" opacity="0.48"/>
<circle cx="80.9" cy="130.7" r="5.6" fill="#1f6fb0" opacity="0.45"/>
<circle cx="178.6" cy="18.3" r="7.8" fill="#0f4a80" opacity="0.54"/>
<circle cx="40.9" cy="130.0" r="7.3" fill="#3a8fc8" opacity="0.39"/>
<circle cx="85.7" cy="124.7" r="3.0" fill="#1a5f9e" opacity="0.51"/>
<circle cx="-0.8" cy="35.1" r="5.3" fill="#3596cf" opacity="0.74"/>
<circle cx="15.0" cy="150.4" r="4.0" fill="#0f4a80" opacity="0.36"/>
<circle cx="127.4" cy="148.0" r="6.0" fill="#0f4a80" opacity="0.58"/>
<circle cx="8.5" cy="57.8" r="6.9" fill="#3596cf" opacity="0.74"/>
<circle cx="152.6" cy="88.9" r="4.1" fill="#3596cf" opacity="0.70"/>
<circle cx="100.4" cy="134.9" r="7.1" fill="#3596cf" opacity="0.36"/>
<circle cx="203.0" cy="21.7" r="4.7" fill="#2270b5" opacity="0.70"/>
<circle cx="102.6" cy="150.5" r="8.0" fill="#3a8fc8" opacity="0.53"/>
<circle cx="43.6" cy="17.3" r="4.8" fill="#1f6fb0" opacity="0.65"/>
<circle cx="26.5" cy="22.1" r="5.3" fill="#2a7dbe" opacity="0.66"/>
<circle cx="4.2" cy="60.5" r="3.7" fill="#1f6fb0" opacity="0.69"/>
<circle cx="120.9" cy="45.8" r="5.3" fill="#0f4a80" opacity="0.46"/>
<circle cx="2.9" cy="24.6" r="5.1" fill="#2270b5" opacity="0.41"/>
<circle cx="161.7" cy="48.5" r="4.1" fill="#2270b5" opacity="0.58"/>
<circle cx="18.0" cy="12.8" r="6.2" fill="#15528a" opacity="0.49"/>
<circle cx="108.1" cy="134.3" r="7.8" fill="#1a5f9e" opacity="0.47"/>
<circle cx="134.1" cy="112.0" r="3.7" fill="#0f4a80" opacity="0.65"/>
<circle cx="9.3" cy="-2.6" r="4.1" fill="#3a8fc8" opacity="0.58"/>
<circle cx="150.7" cy="121.9" r="3.3" fill="#3a8fc8" opacity="0.37"/>
<circle cx="93.3" cy="50.3" r="3.1" fill="#2270b5" opacity="0.55"/>
<circle cx="21.1" cy="14.7" r="7.5" fill="#2270b5" opacity="0.67"/>
<circle cx="37.5" cy="144.1" r="3.4" fill="#0f4a80" opacity="0.37"/>
<circle cx="49.1" cy="94.1" r="3.5" fill="#2270b5" opacity="0.72"/>
<circle cx="90.1" cy="60.4" r="5.3" fill="#2a7dbe" opacity="0.57"/>
<circle cx="139.3" cy="28.2" r="5.3" fill="#1f6fb0" opacity="0.68"/>
<circle cx="24.8" cy="136.6" r="4.9" fill="#15528a" opacity="0.47"/>
<circle cx="65.3" cy="120.4" r="6.7" fill="#2270b5" opacity="0.46"/>
<circle cx="1.3" cy="35.4" r="3.8" fill="#3a8fc8" opacity="0.67"/>
<circle cx="146.0" cy="135.0" r="7.6" fill="#1a5f9e" opacity="0.62"/>
<circle cx="139.2" cy="139.3" r="4.8" fill="#2a7dbe" opacity="0.35"/>
<circle cx="6.0" cy="126.8" r="5.5" fill="#1f6fb0" opacity="0.36"/>
<circle cx="99.9" cy="61.0" r="5.7" fill="#0f4a80" opacity="0.63"/>
<circle cx="51.5" cy="146.8" r="3.6" fill="#2a7dbe" opacity="0.67"/>
<circle cx="145.9" cy="1.8" r="6.6" fill="#2270b5" opacity="0.64"/>
<circle cx="12.7" cy="97.9" r="7.2" fill="#2a7dbe" opacity="0.53"/>
<circle cx="72.9" cy="67.5" r="4.5" fill="#15528a" opacity="0.58"/>
<circle cx="34.6" cy="29.6" r="4.3" fill="#3a8fc8" opacity="0.56"/>
<circle cx="33.3" cy="154.0" r="6.2" fill="#0f4a80" opacity="0.63"/>
<circle cx="160.9" cy="23.0" r="3.7" fill="#0f4a80" opacity="0.43"/>
<circle cx="123.1" cy="144.7" r="4.7" fill="#1f6fb0" opacity="0.42"/>
<circle cx="63.3" cy="74.0" r="5.7" fill="#3a8fc8" opacity="0.60"/>
<circle cx="163.9" cy="62.1" r="6.9" fill="#15528a" opacity="0.48"/>
<circle cx="22.5" cy="36.5" r="4.8" fill="#2270b5" opacity="0.57"/>
<circle cx="175.9" cy="8.8" r="7.1" fill="#2a7dbe" opacity="0.50"/>
<circle cx="21.3" cy="96.1" r="7.2" fill="#1a5f9e" opacity="0.37"/>
<circle cx="157.3" cy="110.8" r="4.3" fill="#3596cf" opacity="0.74"/>
<circle cx="69.6" cy="48.9" r="8.0" fill="#3596cf" opacity="0.38"/>
<circle cx="71.9" cy="23.8" r="7.7" fill="#3596cf" opacity="0.40"/>
<circle cx="101.1" cy="31.2" r="3.1" fill="#2270b5" opacity="0.64"/>
<circle cx="168.8" cy="46.7" r="4.8" fill="#2a7dbe" opacity="0.56"/>
<circle cx="21.2" cy="118.0" r="3.6" fill="#2a7dbe" opacity="0.39"/>
<circle cx="106.6" cy="38.5" r="5.8" fill="#3596cf" opacity="0.37"/>
<circle cx="29.1" cy="100.0" r="3.9" fill="#3a8fc8" opacity="0.50"/>
<circle cx="30.6" cy="3.6" r="7.7" fill="#0f4a80" opacity="0.49"/>
<circle cx="136.0" cy="122.7" r="6.2" fill="#2270b5" opacity="0.48"/>
<circle cx="184.8" cy="36.0" r="5.4" fill="#2a7dbe" opacity="0.41"/>
<circle cx="46.7" cy="106.2" r="6.6" fill="#2a7dbe" opacity="0.55"/>
<circle cx="54.7" cy="35.0" r="6.2" fill="#0f4a80" opacity="0.47"/>
<circle cx="113.3" cy="103.3" r="7.0" fill="#0f4a80" opacity="0.40"/>
<circle cx="143.0" cy="35.3" r="4.8" fill="#1f6fb0" opacity="0.59"/>
<circle cx="136.6" cy="28.1" r="3.1" fill="#0f4a80" opacity="0.64"/>
<circle cx="119.6" cy="134.8" r="7.6" fill="#2270b5" opacity="0.62"/>
<circle cx="9.8" cy="41.2" r="5.6" fill="#2270b5" opacity="0.54"/>
<circle cx="162.0" cy="116.1" r="6.6" fill="#1f6fb0" opacity="0.57"/>
<circle cx="35.7" cy="149.2" r="5.1" fill="#2270b5" opacity="0.54"/>
<circle cx="81.7" cy="112.1" r="5.5" fill="#1f6fb0" opacity="0.42"/>
<circle cx="121.1" cy="-4.8" r="7.0" fill="#0f4a80" opacity="0.73"/>
<circle cx="6.0" cy="80.6" r="5.4" fill="#2a7dbe" opacity="0.68"/>
<circle cx="38.1" cy="22.3" r="5.5" fill="#3596cf" opacity="0.64"/>
<circle cx="93.2" cy="98.2" r="4.1" fill="#2270b5" opacity="0.76"/>
<circle cx="47.3" cy="32.7" r="3.3" fill="#15528a" opacity="0.55"/>
<circle cx="73.1" cy="112.7" r="4.9" fill="#0f4a80" opacity="0.70"/>
<circle cx="130.3" cy="-4.6" r="5.1" fill="#0f4a80" opacity="0.36"/>
<circle cx="190.4" cy="12.0" r="5.3" fill="#0f4a80" opacity="0.75"/>
<circle cx="114.7" cy="41.3" r="3.4" fill="#0f4a80" opacity="0.73"/>
<circle cx="151.6" cy="109.6" r="7.3" fill="#3a8fc8" opacity="0.36"/>
<circle cx="46.3" cy="5.6" r="4.7" fill="#2a7dbe" opacity="0.59"/>
<circle cx="221.3" cy="22.5" r="5.0" fill="#1f6fb0" opacity="0.54"/>
<circle cx="71.5" cy="111.6" r="4.9" fill="#1a5f9e" opacity="0.70"/>
<circle cx="24.2" cy="56.4" r="3.9" fill="#1a5f9e" opacity="0.53"/>
<circle cx="110.0" cy="60.4" r="3.1" fill="#0f4a80" opacity="0.59"/>
<circle cx="46.3" cy="105.0" r="7.2" fill="#2270b5" opacity="0.69"/>
<circle cx="163.2" cy="100.3" r="7.4" fill="#0f4a80" opacity="0.68"/>
<circle cx="46.7" cy="88.1" r="6.6" fill="#1f6fb0" opacity="0.44"/>
<circle cx="131.0" cy="129.4" r="4.8" fill="#2a7dbe" opacity="0.67"/>
<circle cx="105.4" cy="125.5" r="6.1" fill="#1a5f9e" opacity="0.35"/>
<circle cx="33.0" cy="63.1" r="3.5" fill="#1f6fb0" opacity="0.67"/>
<circle cx="114.0" cy="127.6" r="7.5" fill="#2a7dbe" opacity="0.57"/>
<circle cx="88.7" cy="153.1" r="6.6" fill="#15528a" opacity="0.69"/>
<circle cx="116.8" cy="123.5" r="5.3" fill="#15528a" opacity="0.62"/>
<circle cx="131.9" cy="22.3" r="5.1" fill="#0f4a80" opacity="0.79"/>
<circle cx="-0.8" cy="71.9" r="3.5" fill="#2a7dbe" opacity="0.70"/>
<circle cx="118.4" cy="8.3" r="6.3" fill="#15528a" opacity="0.39"/>
<circle cx="181.2" cy="60.2" r="4.6" fill="#1f6fb0" opacity="0.49"/>
<circle cx="167.8" cy="14.8" r="5.6" fill="#2a7dbe" opacity="0.69"/>
<circle cx="16.7" cy="72.9" r="7.4" fill="#3a8fc8" opacity="0.55"/>
<circle cx="33.5" cy="39.5" r="5.2" fill="#2a7dbe" opacity="0.79"/>
<circle cx="126.8" cy="136.0" r="7.2" fill="#2270b5" opacity="0.38"/>
<circle cx="91.0" cy="61.2" r="3.8" fill="#3596cf" opacity="0.39"/>
<circle cx="82.3" cy="28.4" r="6.4" fill="#0f4a80" opacity="0.50"/>
<circle cx="4.0" cy="149.5" r="6.5" fill="#1f6fb0" opacity="0.62"/>
<circle cx="112.3" cy="137.3" r="5.6" fill="#2a7dbe" opacity="0.73"/>
<circle cx="140.3" cy="67.2" r="6.3" fill="#3596cf" opacity="0.77"/>
<circle cx="26.6" cy="5.1" r="4.6" fill="#1f6fb0" opacity="0.49"/>
<circle cx="88.1" cy="91.5" r="6.0" fill="#1a5f9e" opacity="0.35"/>
<circle cx="31.5" cy="43.9" r="5.8" fill="#1f6fb0" opacity="0.38"/>
<circle cx="15.8" cy="95.3" r="4.4" fill="#3a8fc8" opacity="0.37"/>
<circle cx="111.4" cy="20.9" r="4.7" fill="#3596cf" opacity="0.73"/>
<circle cx="152.9" cy="130.6" r="3.9" fill="#0f4a80" opacity="0.80"/>
<circle cx="211.6" cy="9.2" r="5.2" fill="#2270b5" opacity="0.52"/>
<circle cx="28.2" cy="114.6" r="6.6" fill="#0f4a80" opacity="0.51"/>
<circle cx="41.2" cy="152.4" r="3.0" fill="#3596cf" opacity="0.49"/>
<circle cx="44.7" cy="19.9" r="7.6" fill="#0f4a80" opacity="0.40"/>
<circle cx="91.4" cy="26.1" r="4.0" fill="#3596cf" opacity="0.46"/>
<circle cx="122.3" cy="87.9" r="5.5" fill="#2a7dbe" opacity="0.70"/>
<circle cx="73.1" cy="49.2" r="6.1" fill="#1a5f9e" opacity="0.73"/>
<circle cx="-1.8" cy="26.4" r="3.2" fill="#0f4a80" opacity="0.59"/>
<circle cx="6.6" cy="30.9" r="7.9" fill="#15528a" opacity="0.45"/>
<circle cx="111.3" cy="0.2" r="3.6" fill="#3a8fc8" opacity="0.40"/>
<circle cx="171.9" cy="14.1" r="7.5" fill="#2a7dbe" opacity="0.70"/>
<circle cx="81.0" cy="60.7" r="6.9" fill="#2270b5" opacity="0.38"/>
<circle cx="39.7" cy="110.2" r="5.5" fill="#1f6fb0" opacity="0.70"/>
<circle cx="114.8" cy="32.2" r="3.3" fill="#3a8fc8" opacity="0.52"/>
<circle cx="141.2" cy="40.2" r="3.2" fill="#2270b5" opacity="0.35"/>
<circle cx="32.6" cy="113.6" r="7.6" fill="#15528a" opacity="0.52"/>
<circle cx="146.1" cy="46.6" r="5.0" fill="#15528a" opacity="0.47"/>
<circle cx="50.0" cy="129.5" r="5.9" fill="#0f4a80" opacity="0.42"/>
<circle cx="-2.7" cy="88.5" r="4.1" fill="#1f6fb0" opacity="0.60"/>
<circle cx="17.7" cy="32.9" r="4.9" fill="#3a8fc8" opacity="0.48"/>
<circle cx="181.3" cy="28.0" r="7.6" fill="#2a7dbe" opacity="0.62"/>
<circle cx="151.8" cy="129.1" r="6.0" fill="#3a8fc8" opacity="0.74"/>
<circle cx="155.4" cy="105.5" r="3.4" fill="#1a5f9e" opacity="0.62"/>
<circle cx="167.4" cy="97.4" r="5.8" fill="#1f6fb0" opacity="0.49"/>
<circle cx="137.7" cy="91.9" r="6.3" fill="#2270b5" opacity="0.52"/>
<circle cx="149.4" cy="49.0" r="4.0" fill="#3a8fc8" opacity="0.68"/>
<circle cx="150.7" cy="129.8" r="7.6" fill="#1a5f9e" opacity="0.48"/>
<circle cx="2.9" cy="38.2" r="3.8" fill="#3596cf" opacity="0.72"/>
<circle cx="64.0" cy="97.4" r="4.6" fill="#2a7dbe" opacity="0.63"/>
<circle cx="0.3" cy="31.6" r="4.4" fill="#3596cf" opacity="0.55"/>
<circle cx="60.7" cy="71.8" r="5.4" fill="#1a5f9e" opacity="0.53"/>
<circle cx="234.4" cy="4.9" r="7.9" fill="#3596cf" opacity="0.63"/>
<circle cx="6.3" cy="75.8" r="6.3" fill="#15528a" opacity="0.58"/>
<circle cx="39.7" cy="64.0" r="7.0" fill="#1a5f9e" opacity="0.77"/>
<circle cx="174.6" cy="31.9" r="6.1" fill="#1f6fb0" opacity="0.48"/>
<circle cx="117.3" cy="131.1" r="3.9" fill="#0f4a80" opacity="0.57"/>
<circle cx="120.1" cy="96.0" r="4.2" fill="#3a8fc8" opacity="0.50"/>
<circle cx="16.5" cy="119.3" r="6.3" fill="#1f6fb0" opacity="0.74"/>
<circle cx="32.4" cy="72.8" r="6.1" fill="#1a5f9e" opacity="0.78"/>
<circle cx="11.5" cy="63.2" r="7.6" fill="#2a7dbe" opacity="0.69"/>
<circle cx="80.1" cy="118.2" r="5.7" fill="#15528a" opacity="0.67"/>
<circle cx="120.8" cy="100.2" r="5.8" fill="#1f6fb0" opacity="0.70"/>
<circle cx="144.8" cy="-3.6" r="7.9" fill="#3a8fc8" opacity="0.44"/>
<circle cx="71.1" cy="124.9" r="4.2" fill="#2a7dbe" opacity="0.61"/>
<circle cx="78.8" cy="36.5" r="4.8" fill="#1f6fb0" opacity="0.49"/>
<circle cx="196.8" cy="33.0" r="4.4" fill="#3a8fc8" opacity="0.77"/>
<circle cx="85.3" cy="35.0" r="4.5" fill="#0f4a80" opacity="0.46"/>
<circle cx="130.5" cy="95.8" r="3.2" fill="#2a7dbe" opacity="0.40"/>
<circle cx="71.7" cy="18.3" r="7.7" fill="#3a8fc8" opacity="0.49"/>
<circle cx="236.3" cy="2.0" r="7.5" fill="#3596cf" opacity="0.52"/>
<circle cx="24.2" cy="128.5" r="5.6" fill="#3596cf" opacity="0.68"/>
<circle cx="201.8" cy="-4.0" r="4.5" fill="#0f4a80" opacity="0.41"/>
<circle cx="87.7" cy="149.2" r="7.3" fill="#2270b5" opacity="0.39"/>
<circle cx="103.8" cy="78.3" r="5.3" fill="#2270b5" opacity="0.68"/>
<circle cx="127.7" cy="6.9" r="8.0" fill="#2a7dbe" opacity="0.40"/>
<circle cx="55.7" cy="154.5" r="6.1" fill="#3a8fc8" opacity="0.65"/>
<circle cx="166.4" cy="78.4" r="4.8" fill="#1a5f9e" opacity="0.67"/>
<circle cx="1.1" cy="93.8" r="5.1" fill="#0f4a80" opacity="0.50"/>
<circle cx="54.6" cy="45.2" r="5.5" fill="#3a8fc8" opacity="0.45"/>
<circle cx="119.4" cy="35.5" r="4.3" fill="#2270b5" opacity="0.79"/>
<circle cx="105.3" cy="102.4" r="5.3" fill="#1f6fb0" opacity="0.65"/>
<circle cx="7.9" cy="63.1" r="7.2" fill="#1a5f9e" opacity="0.44"/>
<circle cx="54.8" cy="5.2" r="5.6" fill="#1a5f9e" opacity="0.45"/>
<circle cx="160.0" cy="86.7" r="7.3" fill="#0f4a80" opacity="0.78"/>
<circle cx="13.7" cy="39.7" r="6.3" fill="#2270b5" opacity="0.66"/>
<circle cx="5.0" cy="50.6" r="4.7" fill="#1a5f9e" opacity="0.73"/>
<circle cx="92.2" cy="60.7" r="6.0" fill="#3596cf" opacity="0.54"/>
<circle cx="2.9" cy="135.9" r="3.5" fill="#3a8fc8" opacity="0.76"/>
<circle cx="104.0" cy="79.1" r="7.4" fill="#2a7dbe" opacity="0.54"/>
<circle cx="44.6" cy="30.1" r="3.6" fill="#1f6fb0" opacity="0.52"/>
<circle cx="75.2" cy="31.4" r="3.8" fill="#15528a" opacity="0.48"/>
<circle cx="38.5" cy="136.5" r="7.6" fill="#1f6fb0" opacity="0.69"/>
<circle cx="78.7" cy="8.9" r="5.5" fill="#2270b5" opacity="0.39"/>
<circle cx="32.7" cy="47.6" r="6.5" fill="#1a5f9e" opacity="0.56"/>
<circle cx="153.5" cy="89.3" r="6.9" fill="#3a8fc8" opacity="0.40"/>
<circle cx="175.4" cy="86.9" r="6.5" fill="#1f6fb0" opacity="0.73"/>
<circle cx="222.0" cy="13.3" r="5.6" fill="#1a5f9e" opacity="0.66"/>
<circle cx="173.1" cy="27.6" r="5.0" fill="#1a5f9e" opacity="0.41"/>
<circle cx="207.2" cy="41.0" r="6.1" fill="#0f4a80" opacity="0.49"/>
<circle cx="62.6" cy="47.9" r="7.9" fill="#3596cf" opacity="0.56"/>
<circle cx="138.3" cy="99.9" r="4.3" fill="#2a7dbe" opacity="0.71"/>
<circle cx="16.3" cy="11.7" r="5.0" fill="#2a7dbe" opacity="0.73"/>
<circle cx="102.5" cy="70.4" r="4.9" fill="#2270b5" opacity="0.41"/>
<circle cx="145.1" cy="87.2" r="3.6" fill="#1a5f9e" opacity="0.76"/>
<circle cx="12.0" cy="40.0" r="6.1" fill="#3a8fc8" opacity="0.69"/>
<circle cx="93.7" cy="16.1" r="6.8" fill="#3a8fc8" opacity="0.76"/>
<circle cx="107.3" cy="7.1" r="6.7" fill="#2a7dbe" opacity="0.62"/>
<circle cx="181.4" cy="64.7" r="5.9" fill="#2270b5" opacity="0.40"/>
<circle cx="30.6" cy="72.5" r="4.8" fill="#0f4a80" opacity="0.36"/>
<circle cx="30.4" cy="133.1" r="6.2" fill="#1a5f9e" opacity="0.66"/>
<circle cx="93.7" cy="1.0" r="3.9" fill="#15528a" opacity="0.62"/>
<circle cx="111.8" cy="71.8" r="5.1" fill="#3a8fc8" opacity="0.50"/>
<circle cx="84.5" cy="115.2" r="6.4" fill="#3596cf" opacity="0.40"/>
<circle cx="0.6" cy="102.4" r="6.6" fill="#0f4a80" opacity="0.77"/>
<circle cx="78.7" cy="101.3" r="6.2" fill="#2a7dbe" opacity="0.50"/>
<circle cx="94.4" cy="15.0" r="6.4" fill="#2a7dbe" opacity="0.65"/>
<circle cx="126.4" cy="6.7" r="7.5" fill="#0f4a80" opacity="0.55"/>
<circle cx="147.7" cy="25.6" r="8.0" fill="#2a7dbe" opacity="0.76"/>
<circle cx="62.8" cy="111.9" r="7.5" fill="#3596cf" opacity="0.45"/>
<circle cx="145.6" cy="18.9" r="4.0" fill="#3a8fc8" opacity="0.37"/>
<circle cx="-4.7" cy="54.8" r="4.3" fill="#0f4a80" opacity="0.57"/>
<circle cx="110.3" cy="7.5" r="7.4" fill="#1a5f9e" opacity="0.61"/>
<circle cx="129.4" cy="121.3" r="5.9" fill="#1f6fb0" opacity="0.60"/>
<circle cx="204.8" cy="10.4" r="3.6" fill="#1f6fb0" opacity="0.59"/>
<circle cx="55.3" cy="68.8" r="3.1" fill="#3a8fc8" opacity="0.52"/>
<circle cx="24.0" cy="117.4" r="6.6" fill="#0f4a80" opacity="0.49"/>
<circle cx="51.4" cy="150.0" r="5.8" fill="#3a8fc8" opacity="0.46"/>
<circle cx="44.2" cy="144.4" r="7.4" fill="#2a7dbe" opacity="0.68"/>
<circle cx="93.7" cy="70.8" r="6.4" fill="#2270b5" opacity="0.77"/>
<circle cx="117.5" cy="-2.6" r="3.1" fill="#3596cf" opacity="0.77"/>
<circle cx="34.8" cy="56.5" r="7.4" fill="#1a5f9e" opacity="0.50"/>
<circle cx="22.1" cy="45.6" r="7.9" fill="#15528a" opacity="0.64"/>
<circle cx="132.9" cy="100.6" r="4.9" fill="#3596cf" opacity="0.68"/>
<circle cx="119.9" cy="124.0" r="3.3" fill="#2270b5" opacity="0.80"/>
<circle cx="26.1" cy="15.1" r="6.7" fill="#15528a" opacity="0.47"/>
<circle cx="133.0" cy="36.4" r="6.8" fill="#15528a" opacity="0.64"/>
<circle cx="46.4" cy="100.3" r="7.7" fill="#1f6fb0" opacity="0.47"/>
<circle cx="101.4" cy="54.3" r="5.9" fill="#1f6fb0" opacity="0.67"/>
<circle cx="182.1" cy="87.4" r="4.6" fill="#2a7dbe" opacity="0.80"/>
<circle cx="121.4" cy="145.3" r="5.8" fill="#2270b5" opacity="0.72"/>
<circle cx="144.2" cy="127.0" r="4.1" fill="#3596cf" opacity="0.80"/>
<circle cx="237.4" cy="2.0" r="3.4" fill="#15528a" opacity="0.54"/>
<circle cx="89.1" cy="154.6" r="4.0" fill="#2270b5" opacity="0.70"/>
<circle cx="61.1" cy="150.5" r="3.4" fill="#2a7dbe" opacity="0.43"/>
<circle cx="153.1" cy="15.9" r="7.2" fill="#2270b5" opacity="0.68"/>
<circle cx="181.3" cy="37.8" r="5.1" fill="#3596cf" opacity="0.48"/>
<circle cx="57.5" cy="149.8" r="7.6" fill="#1a5f9e" opacity="0.44"/>
<circle cx="142.4" cy="121.3" r="4.2" fill="#3a8fc8" opacity="0.47"/>
<circle cx="36.5" cy="51.3" r="7.1" fill="#3596cf" opacity="0.62"/>
<circle cx="65.9" cy="50.1" r="5.5" fill="#1a5f9e" opacity="0.65"/>
<circle cx="156.2" cy="94.0" r="7.3" fill="#3596cf" opacity="0.40"/>
<circle cx="2.1" cy="99.6" r="5.6" fill="#1f6fb0" opacity="0.55"/>
<circle cx="78.9" cy="33.2" r="6.2" fill="#1f6fb0" opacity="0.48"/>
<circle cx="115.1" cy="60.1" r="6.1" fill="#15528a" opacity="0.75"/>
<circle cx="33.0" cy="136.3" r="4.3" fill="#3a8fc8" opacity="0.43"/>
<circle cx="40.5" cy="62.5" r="6.2" fill="#3a8fc8" opacity="0.79"/>
<circle cx="100.5" cy="79.3" r="7.3" fill="#1a5f9e" opacity="0.68"/>
<circle cx="89.7" cy="26.2" r="6.9" fill="#3a8fc8" opacity="0.73"/>
<circle cx="192.3" cy="-3.1" r="6.2" fill="#2270b5" opacity="0.67"/>
<circle cx="34.0" cy="9.1" r="8.0" fill="#15528a" opacity="0.64"/>
<circle cx="11.2" cy="107.2" r="7.9" fill="#0f4a80" opacity="0.44"/>
<circle cx="169.2" cy="52.0" r="5.3" fill="#1a5f9e" opacity="0.68"/>
<circle cx="65.5" cy="5.0" r="6.9" fill="#2a7dbe" opacity="0.40"/>
<circle cx="169.2" cy="63.5" r="5.3" fill="#3a8fc8" opacity="0.77"/>
<circle cx="116.0" cy="125.6" r="3.3" fill="#0f4a80" opacity="0.49"/>
<circle cx="57.6" cy="-3.7" r="8.0" fill="#1a5f9e" opacity="0.36"/>
<circle cx="210.6" cy="38.7" r="7.6" fill="#2a7dbe" opacity="0.55"/>
<circle cx="135.6" cy="30.9" r="3.4" fill="#0f4a80" opacity="0.46"/>
<circle cx="198.2" cy="57.7" r="3.9" fill="#15528a" opacity="0.61"/>
<circle cx="52.5" cy="138.0" r="5.5" fill="#2a7dbe" opacity="0.79"/>
<circle cx="78.3" cy="82.0" r="5.7" fill="#2270b5" opacity="0.41"/>
<circle cx="62.7" cy="111.7" r="4.8" fill="#15528a" opacity="0.66"/>
<circle cx="151.9" cy="54.0" r="6.4" fill="#3596cf" opacity="0.41"/>
<circle cx="165.2" cy="87.5" r="7.4" fill="#1a5f9e" opacity="0.36"/>
<circle cx="74.8" cy="17.3" r="7.9" fill="#15528a" opacity="0.54"/>
<circle cx="56.2" cy="136.1" r="7.3" fill="#3a8fc8" opacity="0.61"/>
<circle cx="129.4" cy="99.9" r="6.4" fill="#1a5f9e" opacity="0.67"/>
<circle cx="124.5" cy="63.6" r="6.3" fill="#1f6fb0" opacity="0.65"/>
<circle cx="65.1" cy="116.6" r="4.7" fill="#3596cf" opacity="0.44"/>
<circle cx="207.4" cy="-2.2" r="5.3" fill="#15528a" opacity="0.73"/>
<circle cx="126.9" cy="57.5" r="7.4" fill="#1a5f9e" opacity="0.48"/>
<circle cx="73.9" cy="65.4" r="7.4" fill="#1a5f9e" opacity="0.61"/>
<circle cx="15.8" cy="1.7" r="6.0" fill="#3596cf" opacity="0.55"/>
<circle cx="159.7" cy="77.0" r="4.8" fill="#3596cf" opacity="0.76"/>
<circle cx="201.6" cy="39.5" r="7.4" fill="#1a5f9e" opacity="0.44"/>
<circle cx="32.1" cy="126.6" r="4.0" fill="#1a5f9e" opacity="0.70"/>
<circle cx="234.5" cy="5.0" r="7.3" fill="#1a5f9e" opacity="0.41"/>
<circle cx="45.6" cy="65.0" r="3.9" fill="#0f4a80" opacity="0.71"/>
<circle cx="123.4" cy="106.1" r="4.1" fill="#1a5f9e" opacity="0.80"/>
<circle cx="50.9" cy="47.0" r="7.6" fill="#1a5f9e" opacity="0.36"/>
<circle cx="154.6" cy="73.7" r="5.3" fill="#2270b5" opacity="0.63"/>
<circle cx="119.5" cy="139.6" r="7.4" fill="#1f6fb0" opacity="0.68"/>
<circle cx="178.3" cy="26.6" r="5.5" fill="#2270b5" opacity="0.74"/>
<circle cx="35.0" cy="115.1" r="4.0" fill="#15528a" opacity="0.73"/>
<circle cx="98.2" cy="-1.1" r="3.9" fill="#1a5f9e" opacity="0.67"/>
<circle cx="85.5" cy="90.9" r="3.8" fill="#3a8fc8" opacity="0.70"/>
<circle cx="141.2" cy="-4.7" r="4.3" fill="#3596cf" opacity="0.67"/>
<circle cx="189.6" cy="17.8" r="6.0" fill="#3a8fc8" opacity="0.66"/>
<circle cx="103.9" cy="57.8" r="7.9" fill="#0f4a80" opacity="0.42"/>
<circle cx="82.6" cy="106.1" r="4.4" fill="#2270b5" opacity="0.60"/>
<circle cx="144.2" cy="4.0" r="7.5" fill="#15528a" opacity="0.48"/>
<circle cx="179.2" cy="13.6" r="5.7" fill="#15528a" opacity="0.79"/>
<circle cx="6.5" cy="25.0" r="5.5" fill="#15528a" opacity="0.69"/>
<circle cx="0.3" cy="8.0" r="6.5" fill="#15528a" opacity="0.75"/>
<circle cx="102.0" cy="14.3" r="5.1" fill="#15528a" opacity="0.38"/>
<circle cx="133.4" cy="-3.8" r="4.5" fill="#1a5f9e" opacity="0.77"/>
<circle cx="85.4" cy="92.7" r="4.8" fill="#3a8fc8" opacity="0.71"/>
<circle cx="215.7" cy="20.0" r="5.1" fill="#3a8fc8" opacity="0.63"/>
<circle cx="45.4" cy="71.9" r="4.6" fill="#0f4a80" opacity="0.63"/>
<circle cx="99.9" cy="35.1" r="4.3" fill="#2270b5" opacity="0.71"/>
<circle cx="124.3" cy="25.9" r="6.4" fill="#2270b5" opacity="0.77"/>
<circle cx="200.8" cy="25.8" r="6.2" fill="#2270b5" opacity="0.51"/>
<circle cx="88.8" cy="68.1" r="6.5" fill="#3596cf" opacity="0.71"/>
<circle cx="171.0" cy="80.2" r="5.5" fill="#2270b5" opacity="0.51"/>
<circle cx="157.8" cy="26.4" r="5.4" fill="#0f4a80" opacity="0.52"/>
<circle cx="6.3" cy="39.6" r="6.2" fill="#3596cf" opacity="0.73"/>
<circle cx="44.9" cy="19.2" r="3.7" fill="#3a8fc8" opacity="0.49"/>
<circle cx="180.6" cy="69.8" r="5.0" fill="#3a8fc8" opacity="0.51"/>
<circle cx="158.2" cy="125.0" r="5.8" fill="#1f6fb0" opacity="0.59"/>
<circle cx="136.3" cy="77.5" r="7.0" fill="#3596cf" opacity="0.74"/>
<circle cx="79.4" cy="1.7" r="5.4" fill="#1f6fb0" opacity="0.44"/>
<circle cx="233.8" cy="7.0" r="6.2" fill="#15528a" opacity="0.66"/>
<circle cx="79.9" cy="111.2" r="6.2" fill="#3a8fc8" opacity="0.39"/>
<circle cx="133.7" cy="21.4" r="7.6" fill="#0f4a80" opacity="0.64"/>
<circle cx="7.8" cy="145.7" r="7.0" fill="#0f4a80" opacity="0.58"/>
<circle cx="84.2" cy="123.8" r="3.6" fill="#3a8fc8" opacity="0.36"/>
<circle cx="114.8" cy="7.8" r="5.2" fill="#15528a" opacity="0.61"/>
<circle cx="169.3" cy="25.3" r="4.3" fill="#1a5f9e" opacity="0.44"/>
<circle cx="92.0" cy="93.7" r="6.9" fill="#3596cf" opacity="0.79"/>
<circle cx="112.0" cy="116.1" r="4.1" fill="#2a7dbe" opacity="0.73"/>
<circle cx="104.3" cy="76.0" r="7.2" fill="#3596cf" opacity="0.53"/>
<circle cx="43.1" cy="112.1" r="4.5" fill="#2270b5" opacity="0.58"/>
<circle cx="75.6" cy="114.0" r="6.4" fill="#0f4a80" opacity="0.70"/>
<circle cx="11.5" cy="12.7" r="5.7" fill="#15528a" opacity="0.40"/>
<circle cx="142.0" cy="94.2" r="6.1" fill="#2a7dbe" opacity="0.54"/>
<circle cx="1.6" cy="44.1" r="4.3" fill="#2270b5" opacity="0.80"/>
<circle cx="179.0" cy="36.5" r="6.6" fill="#0f4a80" opacity="0.40"/>
<circle cx="29.2" cy="139.5" r="4.4" fill="#0f4a80" opacity="0.49"/>
<circle cx="140.4" cy="10.0" r="4.9" fill="#2270b5" opacity="0.60"/>
<circle cx="66.5" cy="58.5" r="3.3" fill="#3596cf" opacity="0.76"/>
<circle cx="41.2" cy="6.0" r="6.5" fill="#1f6fb0" opacity="0.54"/>
<circle cx="93.3" cy="118.7" r="4.5" fill="#2a7dbe" opacity="0.73"/>
<circle cx="4.9" cy="134.7" r="4.8" fill="#15528a" opacity="0.75"/>
<circle cx="124.8" cy="60.1" r="3.7" fill="#2270b5" opacity="0.51"/>
<circle cx="52.9" cy="11.0" r="5.9" fill="#3596cf" opacity="0.43"/>
<circle cx="4.1" cy="53.4" r="3.6" fill="#1f6fb0" opacity="0.75"/>
<circle cx="28.9" cy="8.1" r="7.9" fill="#1a5f9e" opacity="0.68"/>
<circle cx="108.7" cy="125.6" r="3.3" fill="#0f4a80" opacity="0.46"/>
<circle cx="136.4" cy="89.2" r="6.0" fill="#1f6fb0" opacity="0.59"/>
<circle cx="31.1" cy="109.8" r="3.3" fill="#1a5f9e" opacity="0.48"/>
<circle cx="183.7" cy="74.3" r="4.2" fill="#0f4a80" opacity="0.78"/>
<circle cx="61.4" cy="122.5" r="4.9" fill="#0f4a80" opacity="0.66"/>
<circle cx="81.6" cy="93.3" r="4.0" fill="#1f6fb0" opacity="0.46"/>
<circle cx="195.4" cy="25.5" r="4.5" fill="#2a7dbe" opacity="0.37"/>
<circle cx="41.3" cy="90.8" r="5.8" fill="#3596cf" opacity="0.75"/>
<circle cx="74.2" cy="29.5" r="5.0" fill="#2a7dbe" opacity="0.76"/>
<circle cx="134.1" cy="48.6" r="5.5" fill="#1f6fb0" opacity="0.78"/>
<circle cx="99.3" cy="130.2" r="6.7" fill="#1f6fb0" opacity="0.71"/>
<circle cx="69.3" cy="84.9" r="3.8" fill="#1a5f9e" opacity="0.45"/>
<circle cx="114.6" cy="108.8" r="7.9" fill="#3a8fc8" opacity="0.54"/>
<circle cx="57.6" cy="31.9" r="4.8" fill="#1a5f9e" opacity="0.71"/>
<circle cx="62.0" cy="3.1" r="3.0" fill="#15528a" opacity="0.71"/>
<circle cx="79.2" cy="53.9" r="7.5" fill="#2270b5" opacity="0.50"/></g>
   <ellipse cx="60" cy="60" rx="35" ry="28" fill="#134e86" opacity=".55" filter="url(#bl2)"/>
   <ellipse cx="25" cy="75" rx="14" ry="24" fill="#0d4070" opacity=".6" filter="url(#bl2)"/>
   <ellipse cx="115" cy="95" rx="22" ry="18" fill="#4aa6c8" opacity=".5" filter="url(#bl2)"/>
   <ellipse cx="20" cy="128" rx="25" ry="14" fill="#60b4e4" opacity=".55" filter="url(#bl2)"/>
   <path d="M40 152 C46 138 55 132 64 136 C72 128 84 132 92 126 C100 130 110 126 118 130 C130 132 145 140 160 152 Z" fill="#e8f2f8" filter="url(#bl3)"/><ellipse cx="95" cy="140" rx="30" ry="8" fill="#f4f9fc" filter="url(#bl3)"/>
   <rect x="159.5" y="11.5" width="96.5" height="3.6" fill="#ffffff"/>
   <g fill="none" stroke="#f2f2f2" stroke-width="1" stroke-dasharray="2.2 1.6">
    <rect x="157.5" y="20" width="101" height="108.5"/>
    <line x1="157.5" y1="102.5" x2="258.5" y2="102.5"/>
   </g>
   <line x1="159.5" y1="135.5" x2="256" y2="135.5" stroke="#d8d8d8" stroke-width="1.2"/>
  </svg>
  <div class="tx" style="left:160px;top:23px;font-size:15px;line-height:19px;font-weight:bold;color:#fff;transform:scaleX(1.06)">Click to add<br>title</div>
  <div class="tx" style="left:161.5px;top:120px;font-size:5.2px;line-height:6px;color:#f4f4f4">Click to add subtitle</div>
 </div>
 <!-- thumb 3 -->
 <div class="a" style="left:18.5px;top:318.8px;width:266px;height:150.6px;border-radius:3.5px;overflow:hidden;background:#fff">
  <svg class="a" style="left:0;top:0" width="266" height="151" viewBox="0 0 266 151">
   <defs><filter id="bl5"><feGaussianBlur stdDeviation="1.3"/></filter><clipPath id="cp3"><rect x="123.5" y="0" width="150" height="151"/></clipPath></defs>
   <g filter="url(#bl5)" clip-path="url(#cp3)">
<path d="M124 42 C128 32 136 22 144 22 C152 24 160 38 164 52 C167 62 168 72 165 85 L150 128 L124 128 Z" fill="#3a6fe2"/>
<path d="M150 70 C156 62 166 60 172 66 C178 58 190 60 194 68 C202 62 212 70 214 76 C222 72 232 78 236 84 C246 80 256 84 264 88 C264 96 256 100 248 100 C240 106 226 104 218 110 C208 116 196 112 188 120 C176 126 162 124 150 128 Z" fill="#e6428e"/>
<circle cx="129.9" cy="112.2" r="5.2" fill="#4a5fd8" opacity="0.55"/>
<circle cx="157.5" cy="81.9" r="3.8" fill="#2f86e0" opacity="0.54"/>
<circle cx="125.2" cy="111.7" r="4.0" fill="#3b6fe6" opacity="0.81"/>
<circle cx="135.7" cy="107.2" r="4.6" fill="#3b6fe6" opacity="0.91"/>
<circle cx="125.3" cy="41.2" r="4.4" fill="#8a62d2" opacity="0.81"/>
<circle cx="166.6" cy="109.5" r="4.3" fill="#8a62d2" opacity="0.92"/>
<circle cx="148.3" cy="63.6" r="4.9" fill="#8a62d2" opacity="0.93"/>
<circle cx="164.8" cy="88.9" r="5.7" fill="#2d9ae6" opacity="0.55"/>
<circle cx="151.7" cy="100.9" r="3.5" fill="#2d9ae6" opacity="0.65"/>
<circle cx="155.7" cy="101.2" r="5.8" fill="#8a62d2" opacity="0.73"/>
<circle cx="164.0" cy="73.4" r="3.5" fill="#8a62d2" opacity="0.88"/>
<circle cx="146.2" cy="85.7" r="2.6" fill="#2f86e0" opacity="0.83"/>
<circle cx="141.8" cy="92.7" r="3.8" fill="#2d9ae6" opacity="0.85"/>
<circle cx="156.5" cy="48.6" r="4.8" fill="#3b6fe6" opacity="0.85"/>
<circle cx="146.9" cy="67.0" r="4.2" fill="#3b6fe6" opacity="0.71"/>
<circle cx="137.6" cy="111.4" r="4.7" fill="#6f7ae0" opacity="0.68"/>
<circle cx="131.5" cy="80.4" r="5.9" fill="#2f86e0" opacity="0.74"/>
<circle cx="161.9" cy="73.1" r="4.3" fill="#6f7ae0" opacity="0.66"/>
<circle cx="164.0" cy="103.9" r="4.6" fill="#2d9ae6" opacity="0.50"/>
<circle cx="158.5" cy="111.2" r="5.6" fill="#2d9ae6" opacity="0.73"/>
<circle cx="129.7" cy="105.9" r="3.2" fill="#3b6fe6" opacity="0.72"/>
<circle cx="140.0" cy="82.3" r="5.8" fill="#8a62d2" opacity="0.72"/>
<circle cx="139.7" cy="62.1" r="4.4" fill="#6f7ae0" opacity="0.85"/>
<circle cx="138.6" cy="87.2" r="5.3" fill="#2d9ae6" opacity="0.58"/>
<circle cx="149.7" cy="113.0" r="5.3" fill="#4a5fd8" opacity="0.51"/>
<circle cx="165.5" cy="68.1" r="5.5" fill="#8a62d2" opacity="0.51"/>
<circle cx="157.2" cy="63.1" r="2.9" fill="#6f7ae0" opacity="0.58"/>
<circle cx="136.8" cy="46.4" r="3.4" fill="#2f86e0" opacity="0.80"/>
<circle cx="152.5" cy="62.6" r="5.0" fill="#8a62d2" opacity="0.71"/>
<circle cx="125.0" cy="72.8" r="4.0" fill="#2f86e0" opacity="0.62"/>
<circle cx="135.2" cy="100.5" r="5.9" fill="#6f7ae0" opacity="0.69"/>
<circle cx="166.9" cy="79.7" r="3.9" fill="#3b6fe6" opacity="0.82"/>
<circle cx="131.1" cy="99.0" r="4.9" fill="#6f7ae0" opacity="0.87"/>
<circle cx="167.0" cy="104.0" r="4.9" fill="#8a62d2" opacity="0.60"/>
<circle cx="152.5" cy="71.6" r="4.5" fill="#4a5fd8" opacity="0.80"/>
<circle cx="142.8" cy="99.7" r="2.9" fill="#2f86e0" opacity="0.89"/>
<circle cx="137.5" cy="112.4" r="3.6" fill="#4a5fd8" opacity="0.83"/>
<circle cx="142.3" cy="51.4" r="2.5" fill="#3b6fe6" opacity="0.77"/>
<circle cx="133.6" cy="116.8" r="4.1" fill="#2d9ae6" opacity="0.78"/>
<circle cx="125.6" cy="56.2" r="2.8" fill="#6f7ae0" opacity="0.80"/>
<circle cx="143.0" cy="45.2" r="2.9" fill="#2d9ae6" opacity="0.68"/>
<circle cx="146.2" cy="29.5" r="4.6" fill="#8a62d2" opacity="0.90"/>
<circle cx="124.8" cy="56.8" r="3.6" fill="#6f7ae0" opacity="0.85"/>
<circle cx="138.9" cy="49.5" r="4.9" fill="#8a62d2" opacity="0.92"/>
<circle cx="139.1" cy="114.6" r="4.9" fill="#8a62d2" opacity="0.85"/>
<circle cx="147.4" cy="35.8" r="2.6" fill="#2f86e0" opacity="0.58"/>
<circle cx="164.1" cy="75.0" r="5.2" fill="#6f7ae0" opacity="0.73"/>
<circle cx="135.2" cy="63.6" r="2.9" fill="#2f86e0" opacity="0.89"/>
<circle cx="150.6" cy="121.8" r="5.6" fill="#2f86e0" opacity="0.76"/>
<circle cx="157.9" cy="69.7" r="3.9" fill="#8a62d2" opacity="0.89"/>
<circle cx="158.7" cy="112.0" r="3.7" fill="#6f7ae0" opacity="0.76"/>
<circle cx="164.8" cy="67.2" r="4.4" fill="#6f7ae0" opacity="0.54"/>
<circle cx="135.7" cy="115.6" r="4.5" fill="#3b6fe6" opacity="0.71"/>
<circle cx="136.2" cy="105.7" r="5.4" fill="#3b6fe6" opacity="0.78"/>
<circle cx="124.6" cy="75.3" r="5.4" fill="#3b6fe6" opacity="0.58"/>
<circle cx="158.6" cy="92.1" r="3.1" fill="#8a62d2" opacity="0.58"/>
<circle cx="134.6" cy="101.9" r="2.9" fill="#8a62d2" opacity="0.86"/>
<circle cx="147.9" cy="108.6" r="4.4" fill="#2d9ae6" opacity="0.71"/>
<circle cx="128.4" cy="94.9" r="2.6" fill="#3b6fe6" opacity="0.85"/>
<circle cx="164.7" cy="108.6" r="3.6" fill="#8a62d2" opacity="0.64"/>
<circle cx="126.8" cy="118.4" r="5.9" fill="#8a62d2" opacity="0.55"/>
<circle cx="133.5" cy="90.4" r="5.9" fill="#6f7ae0" opacity="0.89"/>
<circle cx="144.6" cy="61.5" r="3.1" fill="#2f86e0" opacity="0.64"/>
<circle cx="134.8" cy="39.5" r="3.5" fill="#8a62d2" opacity="0.54"/>
<circle cx="149.3" cy="63.8" r="3.3" fill="#4a5fd8" opacity="0.52"/>
<circle cx="132.2" cy="106.9" r="4.5" fill="#4a5fd8" opacity="0.61"/>
<circle cx="128.4" cy="91.3" r="5.3" fill="#3b6fe6" opacity="0.61"/>
<circle cx="124.9" cy="60.5" r="2.8" fill="#6f7ae0" opacity="0.89"/>
<circle cx="156.1" cy="42.5" r="2.5" fill="#4a5fd8" opacity="0.72"/>
<circle cx="162.0" cy="67.9" r="4.3" fill="#4a5fd8" opacity="0.53"/>
<circle cx="165.8" cy="74.9" r="5.2" fill="#2f86e0" opacity="0.87"/>
<circle cx="138.1" cy="39.8" r="4.3" fill="#6f7ae0" opacity="0.63"/>
<circle cx="163.3" cy="69.2" r="5.7" fill="#3b6fe6" opacity="0.85"/>
<circle cx="160.1" cy="98.9" r="4.9" fill="#6f7ae0" opacity="0.88"/>
<circle cx="156.8" cy="99.8" r="3.1" fill="#8a62d2" opacity="0.74"/>
<circle cx="126.1" cy="113.9" r="3.4" fill="#3b6fe6" opacity="0.81"/>
<circle cx="143.7" cy="68.6" r="3.4" fill="#8a62d2" opacity="0.88"/>
<circle cx="143.9" cy="65.0" r="3.7" fill="#4a5fd8" opacity="0.72"/>
<circle cx="158.9" cy="120.5" r="5.9" fill="#3b6fe6" opacity="0.53"/>
<circle cx="139.6" cy="41.8" r="2.9" fill="#4a5fd8" opacity="0.94"/>
<circle cx="136.2" cy="84.5" r="3.1" fill="#3b6fe6" opacity="0.61"/>
<circle cx="124.3" cy="85.4" r="4.3" fill="#2d9ae6" opacity="0.91"/>
<circle cx="164.9" cy="103.1" r="3.3" fill="#4a5fd8" opacity="0.72"/>
<circle cx="145.1" cy="48.8" r="3.9" fill="#6f7ae0" opacity="0.78"/>
<circle cx="156.0" cy="96.4" r="5.9" fill="#2f86e0" opacity="0.52"/>
<circle cx="127.1" cy="82.9" r="5.6" fill="#2f86e0" opacity="0.73"/>
<circle cx="158.9" cy="61.0" r="3.5" fill="#4a5fd8" opacity="0.88"/>
<circle cx="140.4" cy="96.6" r="5.1" fill="#6f7ae0" opacity="0.54"/>
<circle cx="129.4" cy="90.5" r="4.3" fill="#8a62d2" opacity="0.58"/>
<circle cx="135.0" cy="52.2" r="4.5" fill="#3b6fe6" opacity="0.72"/>
<circle cx="141.3" cy="90.1" r="3.8" fill="#2f86e0" opacity="0.74"/>
<circle cx="167.7" cy="98.3" r="2.8" fill="#4a5fd8" opacity="0.78"/>
<circle cx="135.8" cy="117.7" r="5.9" fill="#2f86e0" opacity="0.94"/>
<circle cx="151.1" cy="123.0" r="4.9" fill="#3b6fe6" opacity="0.70"/>
<circle cx="164.7" cy="124.2" r="3.8" fill="#8a62d2" opacity="0.68"/>
<circle cx="164.0" cy="89.5" r="4.7" fill="#8a62d2" opacity="0.93"/>
<circle cx="129.2" cy="90.1" r="3.9" fill="#3b6fe6" opacity="0.80"/>
<circle cx="136.2" cy="66.9" r="4.5" fill="#2f86e0" opacity="0.74"/>
<circle cx="149.5" cy="35.0" r="5.9" fill="#2f86e0" opacity="0.88"/>
<circle cx="133.1" cy="59.6" r="4.4" fill="#4a5fd8" opacity="0.64"/>
<circle cx="157.3" cy="112.0" r="4.1" fill="#2f86e0" opacity="0.75"/>
<circle cx="145.6" cy="111.7" r="5.2" fill="#6f7ae0" opacity="0.90"/>
<circle cx="133.0" cy="108.4" r="5.7" fill="#3b6fe6" opacity="0.55"/>
<circle cx="156.9" cy="87.7" r="5.9" fill="#2d9ae6" opacity="0.94"/>
<circle cx="130.0" cy="80.8" r="4.5" fill="#4a5fd8" opacity="0.70"/>
<circle cx="153.8" cy="104.7" r="3.6" fill="#3b6fe6" opacity="0.70"/>
<circle cx="143.8" cy="55.9" r="3.9" fill="#2d9ae6" opacity="0.81"/>
<circle cx="145.7" cy="91.2" r="3.8" fill="#2f86e0" opacity="0.75"/>
<circle cx="167.8" cy="104.8" r="5.0" fill="#2d9ae6" opacity="0.87"/>
<circle cx="146.5" cy="124.7" r="4.1" fill="#6f7ae0" opacity="0.68"/>
<circle cx="156.8" cy="125.0" r="3.6" fill="#2f86e0" opacity="0.70"/>
<circle cx="153.4" cy="54.8" r="4.3" fill="#2d9ae6" opacity="0.68"/>
<circle cx="142.7" cy="66.5" r="5.5" fill="#6f7ae0" opacity="0.94"/>
<circle cx="154.8" cy="123.2" r="2.7" fill="#2d9ae6" opacity="0.61"/>
<circle cx="166.5" cy="83.2" r="2.6" fill="#2d9ae6" opacity="0.78"/>
<circle cx="151.9" cy="120.3" r="5.2" fill="#2f86e0" opacity="0.85"/>
<circle cx="159.9" cy="94.3" r="3.7" fill="#4a5fd8" opacity="0.86"/>
<circle cx="142.1" cy="94.6" r="3.6" fill="#8a62d2" opacity="0.87"/>
<circle cx="145.3" cy="73.1" r="2.7" fill="#6f7ae0" opacity="0.54"/>
<circle cx="150.0" cy="39.3" r="2.7" fill="#8a62d2" opacity="0.51"/>
<circle cx="146.3" cy="120.7" r="4.9" fill="#8a62d2" opacity="0.79"/>
<circle cx="136.1" cy="59.8" r="4.3" fill="#2f86e0" opacity="0.90"/>
<circle cx="135.8" cy="38.2" r="5.4" fill="#6f7ae0" opacity="0.80"/>
<circle cx="144.6" cy="81.7" r="2.7" fill="#4a5fd8" opacity="0.79"/>
<circle cx="155.4" cy="110.1" r="3.4" fill="#6f7ae0" opacity="0.83"/>
<circle cx="141.3" cy="66.6" r="4.2" fill="#4a5fd8" opacity="0.89"/>
<circle cx="138.5" cy="50.7" r="5.9" fill="#2d9ae6" opacity="0.61"/>
<circle cx="153.1" cy="112.8" r="5.5" fill="#8a62d2" opacity="0.64"/>
<circle cx="143.0" cy="102.1" r="5.2" fill="#2f86e0" opacity="0.53"/>
<circle cx="156.2" cy="115.0" r="4.5" fill="#6f7ae0" opacity="0.91"/>
<circle cx="156.0" cy="92.4" r="3.4" fill="#6f7ae0" opacity="0.57"/>
<circle cx="158.3" cy="117.2" r="4.0" fill="#4a5fd8" opacity="0.84"/>
<circle cx="134.6" cy="99.5" r="5.0" fill="#4a5fd8" opacity="0.53"/>
<circle cx="134.0" cy="62.5" r="5.8" fill="#2f86e0" opacity="0.52"/>
<circle cx="159.6" cy="47.2" r="5.1" fill="#2d9ae6" opacity="0.52"/>
<circle cx="155.0" cy="109.9" r="5.9" fill="#6f7ae0" opacity="0.70"/>
<circle cx="153.2" cy="61.4" r="4.6" fill="#2f86e0" opacity="0.54"/>
<circle cx="141.6" cy="75.9" r="3.8" fill="#2f86e0" opacity="0.94"/>
<circle cx="134.4" cy="58.8" r="4.4" fill="#8a62d2" opacity="0.60"/>
<circle cx="155.5" cy="68.3" r="4.6" fill="#2f86e0" opacity="0.95"/>
<circle cx="259.9" cy="88.2" r="2.1" fill="#f05aa5" opacity="0.83"/>
<circle cx="226.4" cy="87.7" r="2.9" fill="#e34a96" opacity="0.60"/>
<circle cx="152.2" cy="64.4" r="4.2" fill="#ee5e9e" opacity="0.89"/>
<circle cx="191.5" cy="105.4" r="5.1" fill="#e8408f" opacity="0.66"/>
<circle cx="257.0" cy="83.7" r="5.2" fill="#f27ab8" opacity="0.90"/>
<circle cx="209.5" cy="82.2" r="1.9" fill="#d8307c" opacity="0.58"/>
<circle cx="207.7" cy="86.9" r="3.1" fill="#e34a96" opacity="0.80"/>
<circle cx="169.3" cy="114.5" r="4.5" fill="#d8307c" opacity="0.86"/>
<circle cx="189.4" cy="76.4" r="5.4" fill="#f27ab8" opacity="0.57"/>
<circle cx="236.2" cy="86.0" r="3.8" fill="#f27ab8" opacity="0.63"/>
<circle cx="206.3" cy="77.5" r="3.7" fill="#d8307c" opacity="0.80"/>
<circle cx="201.2" cy="99.7" r="4.5" fill="#e34a96" opacity="0.83"/>
<circle cx="204.9" cy="83.9" r="2.6" fill="#d8307c" opacity="0.87"/>
<circle cx="245.7" cy="94.6" r="4.7" fill="#f27ab8" opacity="0.64"/>
<circle cx="260.0" cy="80.7" r="4.4" fill="#e34a96" opacity="0.75"/>
<circle cx="207.4" cy="81.2" r="4.5" fill="#f27ab8" opacity="0.73"/>
<circle cx="257.3" cy="82.4" r="4.1" fill="#e8408f" opacity="0.85"/>
<circle cx="264.7" cy="86.5" r="2.2" fill="#e34a96" opacity="0.79"/>
<circle cx="180.0" cy="96.2" r="2.2" fill="#e34a96" opacity="0.56"/>
<circle cx="244.5" cy="89.9" r="5.1" fill="#e8408f" opacity="0.53"/>
<circle cx="190.1" cy="89.6" r="2.7" fill="#e8408f" opacity="0.54"/>
<circle cx="259.7" cy="95.7" r="1.9" fill="#d8307c" opacity="0.56"/>
<circle cx="257.5" cy="88.1" r="4.5" fill="#e34a96" opacity="0.81"/>
<circle cx="165.7" cy="105.9" r="1.9" fill="#d8307c" opacity="0.92"/>
<circle cx="221.4" cy="88.9" r="3.6" fill="#d8307c" opacity="0.70"/>
<circle cx="237.6" cy="81.1" r="4.5" fill="#d8307c" opacity="0.84"/>
<circle cx="248.9" cy="84.9" r="2.6" fill="#ee5e9e" opacity="0.81"/>
<circle cx="246.1" cy="79.4" r="1.9" fill="#f05aa5" opacity="0.73"/>
<circle cx="239.4" cy="80.6" r="5.0" fill="#d8307c" opacity="0.62"/>
<circle cx="218.9" cy="90.0" r="3.4" fill="#e8408f" opacity="0.81"/>
<circle cx="260.2" cy="84.2" r="2.3" fill="#f05aa5" opacity="0.54"/>
<circle cx="222.3" cy="82.3" r="3.7" fill="#ee5e9e" opacity="0.92"/>
<circle cx="264.4" cy="86.7" r="2.7" fill="#e34a96" opacity="0.60"/>
<circle cx="240.6" cy="96.2" r="4.1" fill="#d8307c" opacity="0.62"/>
<circle cx="197.5" cy="89.5" r="1.9" fill="#f27ab8" opacity="0.57"/>
<circle cx="207.9" cy="89.8" r="2.1" fill="#e8408f" opacity="0.54"/>
<circle cx="169.3" cy="93.9" r="3.7" fill="#f27ab8" opacity="0.70"/>
<circle cx="210.7" cy="97.5" r="3.2" fill="#ee5e9e" opacity="0.91"/>
<circle cx="260.7" cy="85.5" r="3.7" fill="#e34a96" opacity="0.77"/>
<circle cx="251.1" cy="79.8" r="5.2" fill="#e34a96" opacity="0.58"/>
<circle cx="159.0" cy="98.6" r="3.7" fill="#e8408f" opacity="0.77"/>
<circle cx="181.9" cy="78.9" r="5.4" fill="#d8307c" opacity="0.64"/>
<circle cx="250.3" cy="84.3" r="2.5" fill="#ee5e9e" opacity="0.87"/>
<circle cx="243.0" cy="89.4" r="2.0" fill="#ee5e9e" opacity="0.72"/>
<circle cx="172.4" cy="87.4" r="2.9" fill="#d8307c" opacity="0.64"/>
<circle cx="232.7" cy="86.4" r="2.6" fill="#f27ab8" opacity="0.59"/>
<circle cx="214.9" cy="80.2" r="4.6" fill="#f27ab8" opacity="0.90"/>
<circle cx="177.7" cy="102.4" r="2.3" fill="#e34a96" opacity="0.88"/>
<circle cx="223.0" cy="103.5" r="1.9" fill="#ee5e9e" opacity="0.71"/>
<circle cx="153.1" cy="87.1" r="4.4" fill="#d8307c" opacity="0.66"/>
<circle cx="201.5" cy="93.3" r="3.7" fill="#f27ab8" opacity="0.82"/>
<circle cx="233.2" cy="81.6" r="3.4" fill="#f27ab8" opacity="0.88"/>
<circle cx="182.7" cy="93.6" r="2.8" fill="#f27ab8" opacity="0.81"/>
<circle cx="229.8" cy="98.9" r="2.1" fill="#ee5e9e" opacity="0.87"/>
<circle cx="196.8" cy="95.6" r="5.1" fill="#ee5e9e" opacity="0.52"/>
<circle cx="261.9" cy="87.2" r="3.2" fill="#ee5e9e" opacity="0.80"/>
<circle cx="227.7" cy="78.1" r="2.2" fill="#e34a96" opacity="0.94"/>
<circle cx="261.4" cy="88.9" r="3.4" fill="#d8307c" opacity="0.73"/>
<circle cx="231.7" cy="87.5" r="3.5" fill="#ee5e9e" opacity="0.61"/>
<circle cx="190.0" cy="93.2" r="3.5" fill="#ee5e9e" opacity="0.51"/>
<circle cx="217.6" cy="72.6" r="5.1" fill="#f05aa5" opacity="0.68"/>
<circle cx="154.3" cy="91.7" r="4.5" fill="#f27ab8" opacity="0.82"/>
<circle cx="203.3" cy="99.3" r="5.4" fill="#d8307c" opacity="0.82"/>
<circle cx="254.7" cy="97.0" r="4.5" fill="#e34a96" opacity="0.78"/>
<circle cx="195.1" cy="102.5" r="4.3" fill="#ee5e9e" opacity="0.91"/>
<circle cx="202.6" cy="86.5" r="2.5" fill="#e8408f" opacity="0.51"/>
<circle cx="258.4" cy="85.4" r="5.1" fill="#e8408f" opacity="0.68"/>
<circle cx="213.3" cy="74.9" r="4.8" fill="#d8307c" opacity="0.83"/>
<circle cx="216.6" cy="96.2" r="2.3" fill="#e34a96" opacity="0.81"/>
<circle cx="204.4" cy="110.1" r="3.7" fill="#f05aa5" opacity="0.71"/>
<circle cx="172.0" cy="98.3" r="1.8" fill="#f27ab8" opacity="0.74"/>
<circle cx="226.3" cy="87.9" r="2.0" fill="#e34a96" opacity="0.72"/>
<circle cx="227.0" cy="84.9" r="3.7" fill="#e8408f" opacity="0.94"/>
<circle cx="219.8" cy="96.0" r="3.1" fill="#f27ab8" opacity="0.61"/>
<circle cx="221.1" cy="97.0" r="2.0" fill="#f27ab8" opacity="0.67"/>
<circle cx="202.4" cy="73.8" r="2.9" fill="#e8408f" opacity="0.63"/>
<circle cx="202.7" cy="93.5" r="4.9" fill="#e34a96" opacity="0.70"/>
<circle cx="249.8" cy="87.1" r="2.9" fill="#ee5e9e" opacity="0.56"/>
<circle cx="228.7" cy="86.6" r="2.8" fill="#d8307c" opacity="0.64"/>
<circle cx="223.6" cy="80.9" r="4.7" fill="#ee5e9e" opacity="0.79"/>
<circle cx="208.6" cy="101.8" r="2.6" fill="#e34a96" opacity="0.74"/>
<circle cx="247.6" cy="83.1" r="4.8" fill="#ee5e9e" opacity="0.54"/>
<circle cx="152.8" cy="115.0" r="3.7" fill="#e8408f" opacity="0.93"/>
<circle cx="161.1" cy="86.6" r="4.8" fill="#f27ab8" opacity="0.89"/>
<circle cx="173.0" cy="83.9" r="3.1" fill="#f27ab8" opacity="0.70"/>
<circle cx="182.2" cy="101.8" r="5.1" fill="#ee5e9e" opacity="0.70"/>
<circle cx="222.8" cy="96.8" r="2.2" fill="#f05aa5" opacity="0.71"/>
<circle cx="236.0" cy="84.8" r="4.9" fill="#f05aa5" opacity="0.66"/>
<circle cx="241.0" cy="89.2" r="4.1" fill="#f27ab8" opacity="0.86"/>
<circle cx="180.8" cy="88.3" r="3.9" fill="#ee5e9e" opacity="0.93"/>
<circle cx="234.9" cy="76.8" r="4.6" fill="#ee5e9e" opacity="0.92"/>
<circle cx="236.2" cy="94.9" r="4.1" fill="#ee5e9e" opacity="0.53"/>
<circle cx="184.1" cy="90.1" r="3.6" fill="#d8307c" opacity="0.93"/>
<circle cx="169.8" cy="97.4" r="5.4" fill="#f05aa5" opacity="0.94"/>
<circle cx="160.2" cy="96.6" r="5.1" fill="#ee5e9e" opacity="0.84"/>
<circle cx="199.1" cy="94.9" r="3.8" fill="#f05aa5" opacity="0.87"/>
<circle cx="217.6" cy="78.0" r="5.1" fill="#d8307c" opacity="0.64"/>
<circle cx="256.4" cy="84.8" r="2.2" fill="#f05aa5" opacity="0.85"/>
<circle cx="186.8" cy="99.6" r="2.1" fill="#f05aa5" opacity="0.61"/>
<circle cx="176.1" cy="103.1" r="4.1" fill="#d8307c" opacity="0.92"/>
<circle cx="223.8" cy="74.1" r="2.5" fill="#e8408f" opacity="0.69"/>
<circle cx="239.1" cy="77.4" r="2.3" fill="#e34a96" opacity="0.76"/>
<circle cx="161.6" cy="77.8" r="5.3" fill="#f05aa5" opacity="0.95"/>
<circle cx="193.9" cy="74.6" r="3.6" fill="#e34a96" opacity="0.89"/>
<circle cx="211.7" cy="86.2" r="3.7" fill="#ee5e9e" opacity="0.94"/>
<circle cx="263.7" cy="84.5" r="4.9" fill="#f27ab8" opacity="0.58"/>
<circle cx="200.8" cy="97.8" r="4.0" fill="#e8408f" opacity="0.92"/>
<circle cx="227.5" cy="91.8" r="2.9" fill="#ee5e9e" opacity="0.50"/>
<circle cx="160.4" cy="89.9" r="3.1" fill="#f05aa5" opacity="0.51"/>
<circle cx="198.0" cy="101.9" r="4.8" fill="#f27ab8" opacity="0.52"/>
<circle cx="253.2" cy="86.2" r="2.7" fill="#f27ab8" opacity="0.56"/>
<circle cx="151.6" cy="86.6" r="2.0" fill="#e34a96" opacity="0.91"/>
<circle cx="244.2" cy="78.6" r="3.7" fill="#ee5e9e" opacity="0.74"/>
<circle cx="175.9" cy="91.6" r="3.8" fill="#f05aa5" opacity="0.55"/>
<circle cx="172.8" cy="93.0" r="2.0" fill="#f05aa5" opacity="0.78"/>
<circle cx="187.4" cy="83.2" r="5.3" fill="#e34a96" opacity="0.73"/>
<circle cx="255.3" cy="81.6" r="2.4" fill="#e8408f" opacity="0.87"/>
<circle cx="165.7" cy="102.4" r="2.5" fill="#d8307c" opacity="0.69"/>
<circle cx="198.0" cy="88.6" r="3.3" fill="#d8307c" opacity="0.87"/>
<circle cx="213.8" cy="80.9" r="4.6" fill="#d8307c" opacity="0.60"/>
<circle cx="230.3" cy="89.7" r="4.4" fill="#ee5e9e" opacity="0.55"/>
<circle cx="218.4" cy="89.3" r="3.2" fill="#e8408f" opacity="0.79"/>
<circle cx="221.2" cy="82.1" r="4.5" fill="#ee5e9e" opacity="0.82"/>
<circle cx="211.1" cy="87.9" r="2.6" fill="#f05aa5" opacity="0.77"/>
<circle cx="170.9" cy="109.6" r="3.8" fill="#f05aa5" opacity="0.84"/>
<circle cx="158.8" cy="108.3" r="4.3" fill="#f27ab8" opacity="0.78"/>
<circle cx="260.7" cy="89.1" r="4.8" fill="#e34a96" opacity="0.76"/>
<circle cx="196.3" cy="100.2" r="3.3" fill="#ee5e9e" opacity="0.52"/>
<circle cx="182.8" cy="104.7" r="4.5" fill="#e8408f" opacity="0.60"/>
<circle cx="187.0" cy="76.6" r="3.8" fill="#f27ab8" opacity="0.77"/>
<circle cx="235.5" cy="95.0" r="2.3" fill="#f05aa5" opacity="0.85"/>
<circle cx="200.4" cy="82.3" r="3.5" fill="#d8307c" opacity="0.67"/>
<circle cx="219.7" cy="79.1" r="3.4" fill="#f27ab8" opacity="0.88"/>
<circle cx="187.5" cy="79.5" r="2.1" fill="#d8307c" opacity="0.77"/>
<circle cx="248.6" cy="88.8" r="4.2" fill="#f05aa5" opacity="0.81"/>
<circle cx="184.0" cy="110.7" r="2.6" fill="#d8307c" opacity="0.54"/>
<circle cx="154.9" cy="103.2" r="3.8" fill="#ee5e9e" opacity="0.80"/>
<circle cx="244.2" cy="95.1" r="4.4" fill="#d8307c" opacity="0.76"/>
<circle cx="163.4" cy="101.1" r="2.4" fill="#e34a96" opacity="0.85"/>
<circle cx="232.4" cy="81.9" r="2.8" fill="#e8408f" opacity="0.72"/>
<circle cx="241.7" cy="81.3" r="5.2" fill="#f05aa5" opacity="0.75"/>
<circle cx="247.3" cy="90.4" r="4.1" fill="#d8307c" opacity="0.77"/>
<circle cx="230.2" cy="83.3" r="3.7" fill="#f05aa5" opacity="0.79"/>
<circle cx="213.7" cy="89.0" r="5.3" fill="#ee5e9e" opacity="0.68"/>
<circle cx="199.0" cy="99.9" r="5.4" fill="#f27ab8" opacity="0.68"/>
<circle cx="260.4" cy="85.4" r="2.0" fill="#e34a96" opacity="0.87"/>
<circle cx="158.6" cy="105.5" r="5.3" fill="#ee5e9e" opacity="0.50"/>
<circle cx="193.3" cy="82.4" r="2.8" fill="#d8307c" opacity="0.73"/>
<circle cx="208.8" cy="93.4" r="4.7" fill="#e34a96" opacity="0.53"/>
<circle cx="201.8" cy="87.5" r="1.9" fill="#e8408f" opacity="0.56"/>
<circle cx="164.6" cy="80.5" r="3.0" fill="#e34a96" opacity="0.52"/>
<circle cx="164.9" cy="85.3" r="4.2" fill="#e34a96" opacity="0.54"/>
<circle cx="226.4" cy="104.0" r="3.4" fill="#f05aa5" opacity="0.52"/>
<circle cx="207.8" cy="89.6" r="3.9" fill="#d8307c" opacity="0.81"/>
<circle cx="159.4" cy="98.5" r="3.1" fill="#e34a96" opacity="0.85"/>
<circle cx="190.5" cy="109.1" r="4.8" fill="#d8307c" opacity="0.73"/>
<circle cx="261.2" cy="83.6" r="1.9" fill="#d8307c" opacity="0.70"/>
<circle cx="222.1" cy="73.3" r="3.8" fill="#e8408f" opacity="0.89"/>
<circle cx="211.2" cy="80.6" r="3.4" fill="#f05aa5" opacity="0.57"/>
<circle cx="153.3" cy="82.0" r="4.0" fill="#ee5e9e" opacity="0.87"/>
<circle cx="226.8" cy="83.0" r="1.9" fill="#f05aa5" opacity="0.75"/>
<circle cx="173.7" cy="105.5" r="5.2" fill="#e8408f" opacity="0.61"/>
<circle cx="212.4" cy="93.7" r="2.2" fill="#ee5e9e" opacity="0.68"/>
<circle cx="206.5" cy="86.8" r="2.0" fill="#e34a96" opacity="0.95"/>
<circle cx="255.8" cy="95.6" r="3.4" fill="#f05aa5" opacity="0.57"/>
<circle cx="163.2" cy="92.6" r="5.3" fill="#f05aa5" opacity="0.73"/>
<circle cx="199.5" cy="86.5" r="3.4" fill="#ee5e9e" opacity="0.70"/>
<circle cx="165.0" cy="91.1" r="2.7" fill="#f05aa5" opacity="0.94"/>
<circle cx="222.6" cy="82.2" r="3.4" fill="#f27ab8" opacity="0.58"/>
<circle cx="198.9" cy="86.6" r="4.7" fill="#d8307c" opacity="0.84"/>
<circle cx="259.4" cy="89.9" r="1.9" fill="#d8307c" opacity="0.92"/>
<circle cx="150.8" cy="71.9" r="5.2" fill="#f27ab8" opacity="0.76"/>
<circle cx="228.3" cy="88.8" r="3.2" fill="#e34a96" opacity="0.71"/>
<circle cx="225.6" cy="103.8" r="3.9" fill="#e34a96" opacity="0.57"/>
<circle cx="181.7" cy="104.2" r="2.2" fill="#ee5e9e" opacity="0.90"/>
<circle cx="235.4" cy="84.9" r="4.2" fill="#f27ab8" opacity="0.55"/>
<circle cx="218.0" cy="81.2" r="5.4" fill="#f27ab8" opacity="0.70"/>
<circle cx="258.2" cy="81.8" r="4.4" fill="#ee5e9e" opacity="0.66"/>
<circle cx="241.4" cy="85.1" r="4.3" fill="#ee5e9e" opacity="0.58"/>
<circle cx="200.8" cy="96.1" r="4.4" fill="#ee5e9e" opacity="0.86"/>
<circle cx="195.6" cy="104.9" r="3.3" fill="#ee5e9e" opacity="0.82"/>
<circle cx="261.5" cy="82.4" r="2.8" fill="#d8307c" opacity="0.80"/>
<circle cx="194.9" cy="104.6" r="2.2" fill="#d8307c" opacity="0.65"/>
<circle cx="185.1" cy="95.4" r="3.3" fill="#ee5e9e" opacity="0.88"/>
<circle cx="186.1" cy="107.8" r="3.3" fill="#f05aa5" opacity="0.70"/>
<circle cx="159.1" cy="104.3" r="1.9" fill="#e8408f" opacity="0.64"/>
<circle cx="164.4" cy="92.4" r="3.3" fill="#ee5e9e" opacity="0.90"/>
<circle cx="261.6" cy="85.5" r="5.0" fill="#ee5e9e" opacity="0.91"/>
<circle cx="171.8" cy="91.7" r="3.0" fill="#f27ab8" opacity="0.76"/>
<circle cx="233.0" cy="80.5" r="3.5" fill="#d8307c" opacity="0.54"/>
<circle cx="173.0" cy="82.8" r="3.2" fill="#f05aa5" opacity="0.90"/>
<circle cx="211.1" cy="97.5" r="4.2" fill="#e34a96" opacity="0.60"/>
<circle cx="216.6" cy="90.9" r="4.0" fill="#e34a96" opacity="0.89"/>
<circle cx="237.8" cy="87.1" r="4.3" fill="#ee5e9e" opacity="0.82"/>
<circle cx="256.2" cy="77.6" r="4.9" fill="#e34a96" opacity="0.50"/>
<circle cx="173.4" cy="68.7" r="4.1" fill="#f27ab8" opacity="0.85"/>
<circle cx="171.0" cy="98.7" r="4.9" fill="#e8408f" opacity="0.66"/>
<circle cx="161.6" cy="108.3" r="1.9" fill="#d8307c" opacity="0.71"/>
<circle cx="162.2" cy="103.0" r="4.8" fill="#f27ab8" opacity="0.91"/>
<circle cx="223.0" cy="87.3" r="2.8" fill="#f27ab8" opacity="0.74"/>
<circle cx="254.7" cy="94.7" r="2.9" fill="#e8408f" opacity="0.75"/>
<circle cx="213.6" cy="79.3" r="2.1" fill="#f05aa5" opacity="0.58"/>
<circle cx="229.5" cy="80.3" r="3.5" fill="#e8408f" opacity="0.57"/>
<circle cx="174.7" cy="76.6" r="4.8" fill="#ee5e9e" opacity="0.55"/>
<circle cx="170.3" cy="77.7" r="4.8" fill="#f05aa5" opacity="0.51"/>
<circle cx="161.9" cy="115.7" r="3.7" fill="#ee5e9e" opacity="0.78"/>
<circle cx="189.1" cy="105.4" r="5.3" fill="#ee5e9e" opacity="0.83"/>
<circle cx="184.3" cy="93.2" r="3.1" fill="#f05aa5" opacity="0.82"/>
<circle cx="248.7" cy="75.4" r="4.6" fill="#f05aa5" opacity="0.94"/>
<circle cx="205.7" cy="80.6" r="4.3" fill="#d8307c" opacity="0.53"/>
<circle cx="221.2" cy="93.7" r="5.4" fill="#e8408f" opacity="0.50"/>
<circle cx="158.5" cy="115.4" r="4.4" fill="#d8307c" opacity="0.85"/>
<circle cx="227.4" cy="103.9" r="5.2" fill="#f05aa5" opacity="0.54"/>
<circle cx="256.8" cy="76.9" r="2.7" fill="#d8307c" opacity="0.95"/>
<circle cx="250.4" cy="81.8" r="4.3" fill="#f05aa5" opacity="0.68"/>
<circle cx="224.8" cy="93.1" r="5.2" fill="#ee5e9e" opacity="0.75"/>
<circle cx="256.1" cy="81.7" r="3.8" fill="#e8408f" opacity="0.80"/>
<circle cx="153.0" cy="87.0" r="3.4" fill="#ee5e9e" opacity="0.60"/>
<circle cx="179.4" cy="79.0" r="3.8" fill="#e8408f" opacity="0.54"/>
<circle cx="245.6" cy="86.5" r="4.2" fill="#e34a96" opacity="0.80"/>
<circle cx="156.5" cy="83.1" r="5.3" fill="#f05aa5" opacity="0.73"/>
<circle cx="175.8" cy="77.6" r="2.2" fill="#f05aa5" opacity="0.52"/>
<circle cx="160.5" cy="97.9" r="1.9" fill="#e8408f" opacity="0.84"/>
<circle cx="178.3" cy="79.5" r="2.6" fill="#f05aa5" opacity="0.58"/>
<circle cx="163.3" cy="88.1" r="4.5" fill="#f05aa5" opacity="0.68"/>
<circle cx="264.2" cy="80.4" r="3.5" fill="#e8408f" opacity="0.69"/>
<circle cx="228.6" cy="76.2" r="4.9" fill="#f05aa5" opacity="0.70"/>
<circle cx="170.5" cy="110.3" r="4.9" fill="#f05aa5" opacity="0.62"/>
<circle cx="179.2" cy="71.0" r="2.8" fill="#f05aa5" opacity="0.93"/>
<circle cx="258.8" cy="83.6" r="3.6" fill="#f27ab8" opacity="0.84"/>
<circle cx="263.3" cy="92.7" r="2.4" fill="#f27ab8" opacity="0.63"/>
<circle cx="215.5" cy="75.8" r="3.0" fill="#e8408f" opacity="0.75"/>
<circle cx="177.9" cy="88.8" r="3.3" fill="#e34a96" opacity="0.71"/>
<circle cx="158.5" cy="103.8" r="3.5" fill="#ee5e9e" opacity="0.63"/>
<circle cx="261.0" cy="80.5" r="3.2" fill="#e8408f" opacity="0.83"/>
<circle cx="252.0" cy="94.2" r="3.7" fill="#f05aa5" opacity="0.89"/>
<circle cx="184.0" cy="69.1" r="2.1" fill="#d8307c" opacity="0.81"/>
<circle cx="173.7" cy="99.3" r="4.7" fill="#e8408f" opacity="0.70"/>
<circle cx="151.7" cy="70.8" r="2.7" fill="#f05aa5" opacity="0.83"/>
<circle cx="240.6" cy="96.2" r="5.1" fill="#f05aa5" opacity="0.76"/>
<circle cx="244.5" cy="81.7" r="2.8" fill="#d8307c" opacity="0.57"/>
<circle cx="223.6" cy="88.8" r="5.3" fill="#e34a96" opacity="0.91"/>
<circle cx="154.0" cy="96.1" r="3.0" fill="#d8307c" opacity="0.83"/>
<circle cx="253.9" cy="82.6" r="2.0" fill="#d8307c" opacity="0.58"/>
<circle cx="227.0" cy="90.8" r="3.0" fill="#f27ab8" opacity="0.79"/>
<circle cx="169.5" cy="89.3" r="4.4" fill="#f27ab8" opacity="0.56"/>
<circle cx="229.2" cy="84.6" r="2.4" fill="#e8408f" opacity="0.69"/>
<circle cx="245.4" cy="97.7" r="5.4" fill="#e34a96" opacity="0.57"/>
<circle cx="151.6" cy="99.8" r="3.9" fill="#e34a96" opacity="0.71"/>
<circle cx="258.0" cy="95.4" r="5.2" fill="#e34a96" opacity="0.81"/>
<circle cx="186.6" cy="94.4" r="1.9" fill="#e34a96" opacity="0.88"/>
<circle cx="238.1" cy="85.1" r="5.1" fill="#e8408f" opacity="0.57"/>
<circle cx="182.6" cy="106.6" r="1.9" fill="#d8307c" opacity="0.90"/>
<circle cx="160.4" cy="109.5" r="4.3" fill="#ee5e9e" opacity="0.79"/>
<circle cx="169.9" cy="103.5" r="2.4" fill="#e34a96" opacity="0.82"/>
<circle cx="211.6" cy="90.1" r="1.9" fill="#d8307c" opacity="0.55"/>
<circle cx="175.7" cy="100.3" r="4.8" fill="#e34a96" opacity="0.91"/>
<circle cx="148.1" cy="116.8" r="4.2" fill="#d8307c" opacity="0.65"/>
<circle cx="157.8" cy="87.3" r="4.2" fill="#ee5e9e" opacity="0.56"/>
<circle cx="240.2" cy="87.7" r="3.6" fill="#f05aa5" opacity="0.59"/>
<circle cx="193.3" cy="97.1" r="1.8" fill="#f05aa5" opacity="0.87"/>
<circle cx="214.1" cy="84.4" r="4.7" fill="#d8307c" opacity="0.95"/>
<circle cx="153.0" cy="82.0" r="2.9" fill="#e8408f" opacity="0.95"/>
<circle cx="206.6" cy="99.6" r="2.9" fill="#e34a96" opacity="0.69"/>
<circle cx="217.6" cy="99.6" r="5.1" fill="#e8408f" opacity="0.93"/>
<circle cx="222.3" cy="75.3" r="2.0" fill="#e8408f" opacity="0.77"/>
<circle cx="204.1" cy="94.7" r="3.2" fill="#ee5e9e" opacity="0.56"/>
<circle cx="258.1" cy="89.7" r="2.2" fill="#d8307c" opacity="0.64"/>
<circle cx="164.1" cy="77.6" r="3.0" fill="#e8408f" opacity="0.83"/>
<circle cx="244.9" cy="82.9" r="1.8" fill="#f05aa5" opacity="0.63"/>
<circle cx="240.3" cy="100.1" r="2.6" fill="#e8408f" opacity="0.51"/>
<circle cx="161.1" cy="82.4" r="2.2" fill="#e34a96" opacity="0.92"/>
<circle cx="197.6" cy="87.9" r="5.1" fill="#e8408f" opacity="0.58"/>
<circle cx="254.5" cy="86.6" r="5.2" fill="#f05aa5" opacity="0.54"/>
<circle cx="231.5" cy="77.4" r="2.8" fill="#f05aa5" opacity="0.85"/>
<circle cx="183.3" cy="89.6" r="4.5" fill="#e8408f" opacity="0.58"/>
<circle cx="130.7" cy="94.8" r="4.1" fill="#b864c0" opacity="0.65"/>
<circle cx="125.8" cy="60.8" r="5.5" fill="#c45aac" opacity="0.62"/>
<circle cx="129.4" cy="105.9" r="4.6" fill="#b864c0" opacity="0.56"/>
<circle cx="148.1" cy="74.8" r="3.5" fill="#b864c0" opacity="0.70"/>
<circle cx="142.8" cy="64.1" r="5.3" fill="#a05ac8" opacity="0.52"/>
<circle cx="124.9" cy="115.4" r="4.4" fill="#b864c0" opacity="0.69"/>
<circle cx="149.8" cy="85.3" r="5.4" fill="#b864c0" opacity="0.79"/>
<circle cx="127.8" cy="83.4" r="3.1" fill="#b864c0" opacity="0.49"/>
<circle cx="151.0" cy="87.9" r="4.9" fill="#c45aac" opacity="0.57"/>
<circle cx="147.3" cy="96.7" r="4.6" fill="#b864c0" opacity="0.63"/>
<circle cx="149.3" cy="103.6" r="5.8" fill="#c45aac" opacity="0.80"/>
<circle cx="142.8" cy="70.4" r="5.6" fill="#a05ac8" opacity="0.69"/>
<circle cx="129.9" cy="113.2" r="4.7" fill="#c45aac" opacity="0.45"/>
<circle cx="137.5" cy="100.9" r="4.5" fill="#c45aac" opacity="0.72"/>
<circle cx="135.5" cy="69.6" r="3.9" fill="#b864c0" opacity="0.75"/>
<circle cx="125.2" cy="99.3" r="3.1" fill="#c45aac" opacity="0.62"/>
<circle cx="149.8" cy="77.9" r="3.7" fill="#a05ac8" opacity="0.52"/>
<circle cx="126.2" cy="98.4" r="3.1" fill="#8d58cc" opacity="0.79"/>
<circle cx="132.2" cy="76.9" r="5.1" fill="#c45aac" opacity="0.53"/>
<circle cx="150.8" cy="117.4" r="4.1" fill="#b864c0" opacity="0.75"/>
<circle cx="134.8" cy="115.5" r="5.0" fill="#a05ac8" opacity="0.65"/>
<circle cx="150.3" cy="92.4" r="4.3" fill="#8d58cc" opacity="0.77"/>
<circle cx="136.2" cy="76.5" r="3.9" fill="#c45aac" opacity="0.40"/>
<circle cx="135.6" cy="97.1" r="3.1" fill="#8d58cc" opacity="0.42"/>
<circle cx="141.6" cy="89.8" r="5.0" fill="#c45aac" opacity="0.64"/>
<circle cx="131.8" cy="91.3" r="4.8" fill="#a05ac8" opacity="0.79"/>
<circle cx="131.0" cy="89.2" r="4.8" fill="#c45aac" opacity="0.47"/>
<circle cx="129.2" cy="108.5" r="5.5" fill="#c45aac" opacity="0.52"/>
<circle cx="134.6" cy="109.4" r="3.1" fill="#8d58cc" opacity="0.52"/>
<circle cx="130.2" cy="111.4" r="3.7" fill="#8d58cc" opacity="0.67"/>
<circle cx="142.2" cy="66.2" r="4.8" fill="#c45aac" opacity="0.67"/>
<circle cx="130.3" cy="111.8" r="5.9" fill="#a05ac8" opacity="0.53"/>
<circle cx="142.2" cy="116.6" r="4.4" fill="#8d58cc" opacity="0.71"/>
<circle cx="124.9" cy="121.3" r="3.9" fill="#8d58cc" opacity="0.75"/>
<circle cx="133.5" cy="113.0" r="3.3" fill="#c45aac" opacity="0.64"/>
<circle cx="135.8" cy="93.2" r="5.5" fill="#b864c0" opacity="0.54"/>
<circle cx="135.7" cy="86.9" r="4.2" fill="#b864c0" opacity="0.46"/>
<circle cx="124.1" cy="120.4" r="5.6" fill="#b864c0" opacity="0.62"/>
<circle cx="151.6" cy="105.9" r="3.1" fill="#b864c0" opacity="0.73"/>
<circle cx="142.6" cy="93.2" r="3.9" fill="#c45aac" opacity="0.76"/>
<circle cx="148.1" cy="114.9" r="5.9" fill="#a05ac8" opacity="0.72"/>
<circle cx="125.3" cy="117.8" r="5.1" fill="#8d58cc" opacity="0.76"/>
<circle cx="149.2" cy="96.9" r="3.0" fill="#a05ac8" opacity="0.47"/>
<circle cx="132.4" cy="102.4" r="4.6" fill="#b864c0" opacity="0.42"/>
<circle cx="149.6" cy="67.3" r="3.4" fill="#b864c0" opacity="0.72"/>
<circle cx="237.3" cy="71.4" r="1.7" fill="#e8589c" opacity="0.41"/>
<circle cx="214.5" cy="74.3" r="2.1" fill="#e8589c" opacity="0.71"/>
<circle cx="180.0" cy="71.0" r="2.1" fill="#e8589c" opacity="0.76"/>
<circle cx="209.3" cy="56.9" r="1.8" fill="#e8589c" opacity="0.67"/>
<circle cx="217.1" cy="56.8" r="1.6" fill="#f07ab0" opacity="0.54"/>
<circle cx="195.1" cy="60.0" r="2.0" fill="#f07ab0" opacity="0.68"/>
<circle cx="237.6" cy="57.0" r="1.1" fill="#f07ab0" opacity="0.73"/>
<circle cx="250.4" cy="64.7" r="2.2" fill="#f07ab0" opacity="0.61"/>
<circle cx="220.9" cy="69.0" r="2.2" fill="#f07ab0" opacity="0.65"/>
<circle cx="176.9" cy="63.6" r="1.5" fill="#f07ab0" opacity="0.44"/>
<circle cx="246.8" cy="65.5" r="1.2" fill="#e8589c" opacity="0.52"/>
<circle cx="171.6" cy="64.7" r="1.2" fill="#f07ab0" opacity="0.73"/>
<circle cx="246.4" cy="65.4" r="1.3" fill="#f07ab0" opacity="0.41"/>
<circle cx="186.6" cy="73.1" r="1.9" fill="#e8589c" opacity="0.55"/>
<circle cx="208.0" cy="60.8" r="2.0" fill="#e8589c" opacity="0.42"/>
<circle cx="196.5" cy="69.9" r="1.6" fill="#e8589c" opacity="0.50"/>
<circle cx="257.7" cy="72.8" r="2.0" fill="#e8589c" opacity="0.58"/>
<circle cx="241.4" cy="70.9" r="1.8" fill="#e8589c" opacity="0.52"/>
<circle cx="239.8" cy="73.8" r="1.3" fill="#e8589c" opacity="0.58"/>
<circle cx="229.5" cy="74.3" r="1.0" fill="#f07ab0" opacity="0.50"/>
<circle cx="238.2" cy="58.8" r="1.8" fill="#e8589c" opacity="0.77"/>
<circle cx="178.0" cy="63.2" r="2.3" fill="#e8589c" opacity="0.51"/>
<circle cx="202.2" cy="64.6" r="1.2" fill="#e8589c" opacity="0.60"/>
<circle cx="219.8" cy="64.3" r="1.5" fill="#f07ab0" opacity="0.79"/>
<circle cx="251.5" cy="62.5" r="1.9" fill="#e8589c" opacity="0.66"/>
<circle cx="257.3" cy="69.6" r="1.2" fill="#e8589c" opacity="0.62"/>
<circle cx="218.6" cy="74.3" r="1.3" fill="#f07ab0" opacity="0.67"/>
<circle cx="190.8" cy="74.7" r="1.7" fill="#f07ab0" opacity="0.77"/>
   </g>
   <g filter="url(#bl5)">
<circle cx="2.6" cy="76.7" r="2.5" fill="#2a6ee0" opacity="0.64"/>
<circle cx="0.2" cy="88.3" r="2.2" fill="#2a6ee0" opacity="0.69"/>
<circle cx="5.9" cy="81.2" r="1.9" fill="#2a6ee0" opacity="0.70"/>
<circle cx="10.4" cy="74.7" r="3.1" fill="#3a8ae8" opacity="0.92"/>
<circle cx="2.1" cy="82.1" r="3.1" fill="#3a8ae8" opacity="0.63"/>
<circle cx="6.7" cy="91.5" r="2.8" fill="#2a6ee0" opacity="0.70"/>
<circle cx="3.1" cy="98.6" r="3.5" fill="#3a8ae8" opacity="0.60"/>
<circle cx="3.2" cy="92.3" r="2.3" fill="#2a6ee0" opacity="0.77"/>
<circle cx="6.6" cy="85.2" r="1.9" fill="#3a8ae8" opacity="0.70"/>
<circle cx="8.8" cy="76.1" r="2.7" fill="#3a8ae8" opacity="0.81"/>
<circle cx="7.1" cy="92.2" r="1.9" fill="#2a6ee0" opacity="0.63"/>
<circle cx="10.0" cy="90.5" r="2.6" fill="#2a6ee0" opacity="0.74"/>
<circle cx="8.2" cy="82.3" r="2.9" fill="#3a8ae8" opacity="0.64"/>
<circle cx="0.7" cy="80.0" r="3.4" fill="#2a6ee0" opacity="0.65"/>
<circle cx="10.3" cy="81.6" r="1.6" fill="#3a8ae8" opacity="0.88"/>
<circle cx="9.9" cy="98.8" r="3.3" fill="#3a8ae8" opacity="0.61"/>
   </g>
   <g fill="none" stroke="#8a8a8a" stroke-width="1" stroke-dasharray="2 1.3">
    <rect x="18.3" y="33.8" width="97.8" height="81.7"/>
    <line x1="18.3" y1="95" x2="116.1" y2="95" stroke-width="2"/>
   </g>
   <rect x="12" y="125.8" width="111.5" height="2.2" fill="#2f72d4"/>
  </svg>
  <div class="tx" style="left:21.5px;top:36px;font-size:14.5px;line-height:18px;color:#333;transform:scaleX(1.0)">Click to add<br>title</div>
  <div class="tx" style="left:22px;top:108px;font-size:5px;line-height:6px;color:#555;letter-spacing:.5px">CLICK TO ADD SUBTITLE</div>
 </div>
 <!-- thumb 4 -->
 <div class="a" style="left:18px;top:487.8px;width:266.5px;height:40px;border-radius:3.5px;overflow:hidden;border:1px solid #bfb59a;background:linear-gradient(180deg,#bfa070 0%,#cbb68e 40%,#d0c09e 100%)">
  <svg class="a" style="left:0;top:0" width="266" height="40" viewBox="0 0 266 40">
   <defs><filter id="bl6"><feGaussianBlur stdDeviation="1.2"/></filter></defs>
   <ellipse cx="40" cy="6" rx="45" ry="9" fill="#a8824a" opacity=".35" filter="url(#bl6)"/>
   <ellipse cx="200" cy="6" rx="50" ry="6" fill="#b08c58" opacity=".3" filter="url(#bl6)"/>
   <ellipse cx="92" cy="20" rx="6.5" ry="5" fill="#6e2e62" filter="url(#bl6)"/>
   <ellipse cx="112" cy="21" rx="6" ry="4.5" fill="#b83a2a" filter="url(#bl6)"/>
   <ellipse cx="80" cy="22" rx="6" ry="2.6" fill="#8a9258" opacity=".8" filter="url(#bl6)"/>
   <rect x="157" y="15.5" width="38" height="1.5" fill="#f4f4f4"/>
   <line x1="154" y1="22" x2="263" y2="22" stroke="#f0f0f0" stroke-width="1.2" stroke-dasharray="2 2"/>
  </svg>
 </div>
</div>
<svg class="a" style="left:0;top:0" width="1200" height="675"><path d="M1184 630 L1190 637" stroke="#222" stroke-width="1.4"/></svg>

<div class="tx" style="left:37.50px;top:4.20px;font-size:11px;line-height:11px;font-weight:normal;color:#e8e8e8;transform:scaleX(0.8830)">AutoSave</div>
<div class="tx" style="left:106.00px;top:4.20px;font-size:11px;line-height:11px;font-weight:normal;color:#e8e8e8;transform:scaleX(1.0000)">Off</div>
<div class="tx" style="left:290.64px;top:5.00px;font-size:11.5px;line-height:11.5px;font-weight:normal;color:#ececec;transform:scaleX(0.9627)">Presentation1  -  PowerP...</div>
<div class="tx" style="left:489.79px;top:3.75px;font-size:12px;line-height:12px;font-weight:normal;color:#505050;transform:scaleX(1.0056)">Search</div>
<div class="tx" style="left:11.47px;top:41.50px;font-size:12px;line-height:12px;font-weight:normal;color:#f0f0f0;transform:scaleX(1.0278)">File</div>
<div class="tx" style="left:55.90px;top:41.50px;font-size:12px;line-height:12px;font-weight:normal;color:#f0f0f0;transform:scaleX(1.1000)">Home</div>
<div class="tx" style="left:110.00px;top:41.50px;font-size:12px;line-height:12px;font-weight:normal;color:#f0f0f0;transform:scaleX(0.9259)">WPS PDF</div>
<div class="tx" style="left:178.78px;top:41.50px;font-size:12px;line-height:12px;font-weight:bold;color:#f4f4f4;transform:scaleX(1.0219)">Insert</div>
<div class="tx" style="left:229.93px;top:41.50px;font-size:12px;line-height:12px;font-weight:normal;color:#f0f0f0;transform:scaleX(1.0741)">Draw</div>
<div class="tx" style="left:277.97px;top:41.50px;font-size:12px;line-height:12px;font-weight:normal;color:#f0f0f0;transform:scaleX(1.0278)">Design</div>
<div class="tx" style="left:337.00px;top:41.50px;font-size:12px;line-height:12px;font-weight:normal;color:#f0f0f0;transform:scaleX(1.0000)">Transitions</div>
<div class="tx" style="left:415.00px;top:41.50px;font-size:12px;line-height:12px;font-weight:normal;color:#f0f0f0;transform:scaleX(1.0593)">Animations</div>
<div class="tx" style="left:496.47px;top:41.50px;font-size:12px;line-height:12px;font-weight:normal;color:#f0f0f0;transform:scaleX(1.0254)">Slide Show</div>
<div class="tx" style="left:576.97px;top:41.50px;font-size:12px;line-height:12px;font-weight:normal;color:#f0f0f0;transform:scaleX(1.0270)">Record</div>
<div class="tx" style="left:634.60px;top:41.50px;font-size:12px;line-height:12px;font-weight:normal;color:#f0f0f0;transform:scaleX(1.0000)">Review</div>
<div class="tx" style="left:692.70px;top:41.50px;font-size:12px;line-height:12px;font-weight:normal;color:#f0f0f0;transform:scaleX(1.0000)">View</div>
<div class="tx" style="left:736.60px;top:41.50px;font-size:12px;line-height:12px;font-weight:normal;color:#f0f0f0;transform:scaleX(1.1000)">Help</div>
<div class="tx" style="left:782.67px;top:41.50px;font-size:12px;line-height:12px;font-weight:normal;color:#e6bba8;transform:scaleX(1.0267)">Shape Format</div>
<div class="tx" style="left:920.29px;top:40.70px;font-size:12px;line-height:12px;font-weight:normal;color:#262626;transform:scaleX(1.0108)">Record</div>
<div class="tx" style="left:992.31px;top:40.70px;font-size:12px;line-height:12px;font-weight:normal;color:#262626;transform:scaleX(0.9857)">Present in Teams</div>
<div class="tx" style="left:1146.30px;top:40.70px;font-size:12px;line-height:12px;font-weight:normal;color:#3a2216;transform:scaleX(1.0000)">Share</div>
<div class="tx" style="left:19.68px;top:101.60px;font-size:11px;line-height:11px;font-weight:normal;color:#2b2b2b;transform:scaleX(1.0238)">New</div>
<div class="tx" style="left:12.97px;top:116.90px;font-size:11px;line-height:11px;font-weight:normal;color:#2b2b2b;transform:scaleX(1.0348)">Slide</div>
<div class="tx" style="left:73.30px;top:101.60px;font-size:11px;line-height:11px;font-weight:normal;color:#2b2b2b;transform:scaleX(0.9692)">Table</div>
<div class="tx" style="left:122.51px;top:101.70px;font-size:11px;line-height:11px;font-weight:normal;color:#2b2b2b;transform:scaleX(0.9868)">Pictures</div>
<div class="tx" style="left:187.99px;top:79.00px;font-size:11px;line-height:11px;font-weight:normal;color:#2b2b2b;transform:scaleX(1.0148)">Screenshot</div>
<div class="tx" style="left:187.92px;top:108.80px;font-size:11px;line-height:11px;font-weight:normal;color:#2b2b2b;transform:scaleX(1.0820)">Photo Album</div>
<div class="tx" style="left:303.59px;top:102.50px;font-size:11px;line-height:11px;font-weight:normal;color:#2b2b2b;transform:scaleX(1.0118)">Cameo</div>
<div class="tx" style="left:359.03px;top:102.50px;font-size:11px;line-height:11px;font-weight:normal;color:#2b2b2b;transform:scaleX(0.9722)">Shapes</div>
<div class="tx" style="left:405.96px;top:102.50px;font-size:11px;line-height:11px;font-weight:normal;color:#2b2b2b;transform:scaleX(1.0400)">Icons</div>
<div class="tx" style="left:463.33px;top:70.80px;font-size:11px;line-height:11px;font-weight:normal;color:#2b2b2b;transform:scaleX(1.0706)">3D Models</div>
<div class="tx" style="left:463.35px;top:95.00px;font-size:11px;line-height:11px;font-weight:normal;color:#2b2b2b;transform:scaleX(1.0548)">SmartArt</div>
<div class="tx" style="left:463.42px;top:120.00px;font-size:11px;line-height:11px;font-weight:normal;color:#2b2b2b;transform:scaleX(0.9846)">Chart</div>
<div class="tx" style="left:569.00px;top:102.00px;font-size:11px;line-height:11px;font-weight:normal;color:#2b2b2b;transform:scaleX(1.0000)">Power</div>
<div class="tx" style="left:578.83px;top:116.50px;font-size:11px;line-height:11px;font-weight:normal;color:#2b2b2b;transform:scaleX(1.1750)">BI</div>
<div class="tx" style="left:624.00px;top:102.00px;font-size:11px;line-height:11px;font-weight:normal;color:#2b2b2b;transform:scaleX(1.0926)">Zoom</div>
<div class="tx" style="left:669.39px;top:102.00px;font-size:11px;line-height:11px;font-weight:normal;color:#2b2b2b;transform:scaleX(1.0053)">Link</div>
<div class="tx" style="left:705.30px;top:102.00px;font-size:11px;line-height:11px;font-weight:normal;color:#2b2b2b;transform:scaleX(1.0500)">Action</div>
<div class="tx" style="left:756.91px;top:102.00px;font-size:11px;line-height:11px;font-weight:normal;color:#2b2b2b;transform:scaleX(1.0870)">Comment</div>
<div class="tx" style="left:836.70px;top:102.70px;font-size:11px;line-height:11px;font-weight:normal;color:#2b2b2b;transform:scaleX(0.9000)">Text</div>
<div class="tx" style="left:830.74px;top:117.70px;font-size:11px;line-height:11px;font-weight:normal;color:#2b2b2b;transform:scaleX(0.9611)">Box</div>
<div class="tx" style="left:873.70px;top:102.70px;font-size:11px;line-height:11px;font-weight:normal;color:#2b2b2b;transform:scaleX(1.0000)">Header</div>
<div class="tx" style="left:868.92px;top:117.70px;font-size:11px;line-height:11px;font-weight:normal;color:#2b2b2b;transform:scaleX(1.0780)">&amp; Footer</div>
<div class="tx" style="left:921.70px;top:102.70px;font-size:11px;line-height:11px;font-weight:normal;color:#2b2b2b;transform:scaleX(1.0625)">WordArt</div>
<div class="tx" style="left:1006.48px;top:99.75px;font-size:11px;line-height:11px;font-weight:normal;color:#2b2b2b;transform:scaleX(1.0244)">Symbols</div>
<div class="tx" style="left:1067.97px;top:99.75px;font-size:11px;line-height:11px;font-weight:normal;color:#2b2b2b;transform:scaleX(1.0345)">Media</div>
<div class="tx" style="left:16.83px;top:140.70px;font-size:10px;line-height:10px;font-weight:normal;color:#333333;transform:scaleX(0.9692)">Slides</div>
<div class="tx" style="left:72.00px;top:140.70px;font-size:10px;line-height:10px;font-weight:normal;color:#333333;transform:scaleX(0.8966)">Tables</div>
<div class="tx" style="left:186.62px;top:140.70px;font-size:10px;line-height:10px;font-weight:normal;color:#333333;transform:scaleX(0.9806)">Images</div>
<div class="tx" style="left:303.62px;top:140.70px;font-size:10px;line-height:10px;font-weight:normal;color:#333333;transform:scaleX(0.9824)">Camera</div>
<div class="tx" style="left:426.67px;top:140.70px;font-size:10px;line-height:10px;font-weight:normal;color:#333333;transform:scaleX(1.0265)">Illustrations</div>
<div class="tx" style="left:564.33px;top:140.70px;font-size:10px;line-height:10px;font-weight:normal;color:#333333;transform:scaleX(0.9667)">Power BI</div>
<div class="tx" style="left:666.97px;top:140.70px;font-size:10px;line-height:10px;font-weight:normal;color:#333333;transform:scaleX(1.0273)">Links</div>
<div class="tx" style="left:756.97px;top:140.70px;font-size:10px;line-height:10px;font-weight:normal;color:#333333;transform:scaleX(1.0319)">Comments</div>
<div class="tx" style="left:900.50px;top:140.70px;font-size:10px;line-height:10px;font-weight:normal;color:#333333;transform:scaleX(0.8778)">Text</div>
<div class="tx" style="left:433.71px;top:365.00px;font-size:14.5px;line-height:14.5px;font-weight:normal;color:#1e1e1e;transform:scaleX(1.1903)">Click to add subtitle</div>
<div class="tx" style="left:163.71px;top:651.50px;font-size:13.5px;line-height:13.5px;font-weight:normal;color:#e4e4e4;transform:scaleX(1.0377)">Click to add notes</div>
<!-- red annotation box & numbers -->
<div class="a" style="left:164px;top:25.5px;width:62px;height:41px;border:6px solid #ef3a2e"></div>
<svg class="a" style="left:0;top:0" width="1200" height="675" viewBox="0 0 1200 675">
 <path d="M125.6 23.5 L145.4 23.5 L145.4 68.7 L134.8 68.7 L134.8 35.5 L125.6 33.5 Z" fill="#ff0000"/>
</svg>
<div class="tx" style="left:1086.8px;top:60.4px;font-size:63px;line-height:63px;font-weight:bold;color:#ff0000;transform:scaleX(1.08);-webkit-text-stroke:1.3px #ff0000">2</div>

</body></html>
